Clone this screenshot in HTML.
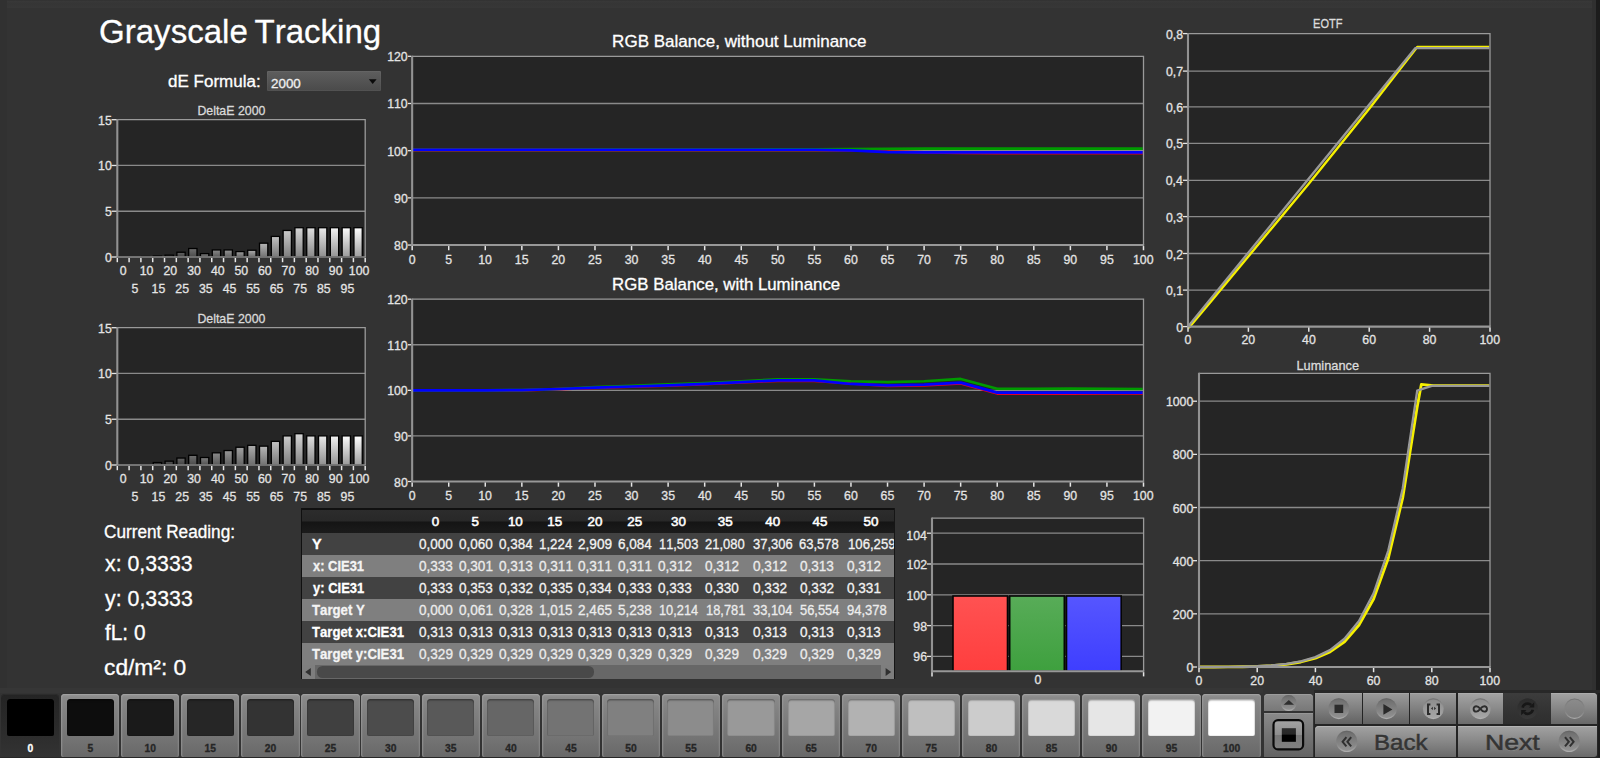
<!DOCTYPE html>
<html lang="en"><head><meta charset="utf-8"><title>Grayscale Tracking</title>
<style>
html,body{margin:0;padding:0;background:#333;}
body{width:1600px;height:758px;overflow:hidden;position:relative;font-family:"Liberation Sans",sans-serif;font-kerning:none;}
#app{position:absolute;left:0;top:0;width:1600px;height:758px;overflow:hidden;background:#333;}
.t{position:absolute;white-space:nowrap;line-height:1;transform-origin:0 0;-webkit-text-stroke:0.3px currentColor;}
svg{position:absolute;left:0;top:0;font-family:"Liberation Sans",sans-serif;font-kerning:none;}
svg text{font-kerning:none;stroke:currentColor;stroke-width:0.3px;}
.abs{position:absolute;}
header,section,nav{display:block;margin:0;padding:0;}
</style></head><body><div id="app">

<div class="abs" style="left:0;top:0;width:1600px;height:7.5px;background:linear-gradient(#2f2f2f 0,#383838 14%,#353535 50%,#373737 100%)"></div>
<div class="abs" style="left:0;top:0;width:7px;height:690px;background:#313131"></div>
<div class="abs" style="left:0;top:687.5px;width:1263px;height:5.2px;background:#363636"></div>
<header id="page-head">
<div class="t " style="left:98.54px;top:15px;font-size:33.6px;color:#fff;transform:scaleX(0.9846);word-spacing:-2.60px;">Grayscale Tracking</div>
<div class="t " style="left:168.28px;top:73px;font-size:17.3px;color:#fff;transform:scaleX(0.9846);">dE Formula:</div>
<div class="abs" id="dd" style="left:267px;top:71px;width:113.5px;height:20px;background:linear-gradient(#5e5e5e,#4a4a4a);border-radius:1px;box-shadow:inset 0 0 0 1px rgba(255,255,255,.04)"></div>
<div class="t " style="left:270.63px;top:77px;font-size:13.6px;color:#f0f0f0;transform:scaleX(0.9849);">2000</div>
</header>
<section id="charts" aria-label="Charts">
<svg width="1600" height="758" viewBox="0 0 1600 758" style="pointer-events:none">
<path d="M368.8 79.3h7.8l-3.9 4.6z" fill="#0a0a0a"/>
<rect x="117.3" y="119.7" width="247.89999999999998" height="137.3" fill="#252525"/>
<line x1="117.3" y1="211.23" x2="365.2" y2="211.23" stroke="#8a8a8a" stroke-width="1.3"/>
<line x1="117.3" y1="165.47" x2="365.2" y2="165.47" stroke="#8a8a8a" stroke-width="1.3"/>
<linearGradient id="g0_2" x1="0" y1="0" x2="0" y2="1"><stop offset="0" stop-color="rgb(55,55,55)"/><stop offset="1" stop-color="rgb(40,40,40)"/></linearGradient>
<rect x="141.46" y="256.54" width="8.3" height="0.46" fill="url(#g0_2)" stroke="#000" stroke-width="1.3"/>
<linearGradient id="g0_3" x1="0" y1="0" x2="0" y2="1"><stop offset="0" stop-color="rgb(71,71,71)"/><stop offset="1" stop-color="rgb(49,49,49)"/></linearGradient>
<rect x="153.27" y="256.08" width="8.3" height="0.92" fill="url(#g0_3)" stroke="#000" stroke-width="1.3"/>
<linearGradient id="g0_4" x1="0" y1="0" x2="0" y2="1"><stop offset="0" stop-color="rgb(86,86,86)"/><stop offset="1" stop-color="rgb(58,58,58)"/></linearGradient>
<rect x="165.07" y="255.17" width="8.3" height="1.83" fill="url(#g0_4)" stroke="#000" stroke-width="1.3"/>
<linearGradient id="g0_5" x1="0" y1="0" x2="0" y2="1"><stop offset="0" stop-color="rgb(100,100,100)"/><stop offset="1" stop-color="rgb(66,66,66)"/></linearGradient>
<rect x="176.88" y="252.24" width="8.3" height="4.76" fill="url(#g0_5)" stroke="#000" stroke-width="1.3"/>
<linearGradient id="g0_6" x1="0" y1="0" x2="0" y2="1"><stop offset="0" stop-color="rgb(113,113,113)"/><stop offset="1" stop-color="rgb(74,74,74)"/></linearGradient>
<rect x="188.68" y="248.49" width="8.3" height="8.51" fill="url(#g0_6)" stroke="#000" stroke-width="1.3"/>
<linearGradient id="g0_7" x1="0" y1="0" x2="0" y2="1"><stop offset="0" stop-color="rgb(126,126,126)"/><stop offset="1" stop-color="rgb(81,81,81)"/></linearGradient>
<rect x="200.49" y="253.61" width="8.3" height="3.39" fill="url(#g0_7)" stroke="#000" stroke-width="1.3"/>
<linearGradient id="g0_8" x1="0" y1="0" x2="0" y2="1"><stop offset="0" stop-color="rgb(138,138,138)"/><stop offset="1" stop-color="rgb(88,88,88)"/></linearGradient>
<rect x="212.29" y="249.95" width="8.3" height="7.05" fill="url(#g0_8)" stroke="#000" stroke-width="1.3"/>
<linearGradient id="g0_9" x1="0" y1="0" x2="0" y2="1"><stop offset="0" stop-color="rgb(150,150,150)"/><stop offset="1" stop-color="rgb(95,95,95)"/></linearGradient>
<rect x="224.10" y="249.95" width="8.3" height="7.05" fill="url(#g0_9)" stroke="#000" stroke-width="1.3"/>
<linearGradient id="g0_10" x1="0" y1="0" x2="0" y2="1"><stop offset="0" stop-color="rgb(161,161,161)"/><stop offset="1" stop-color="rgb(101,101,101)"/></linearGradient>
<rect x="235.90" y="251.60" width="8.3" height="5.40" fill="url(#g0_10)" stroke="#000" stroke-width="1.3"/>
<linearGradient id="g0_11" x1="0" y1="0" x2="0" y2="1"><stop offset="0" stop-color="rgb(172,172,172)"/><stop offset="1" stop-color="rgb(108,108,108)"/></linearGradient>
<rect x="247.70" y="250.23" width="8.3" height="6.77" fill="url(#g0_11)" stroke="#000" stroke-width="1.3"/>
<linearGradient id="g0_12" x1="0" y1="0" x2="0" y2="1"><stop offset="0" stop-color="rgb(183,183,183)"/><stop offset="1" stop-color="rgb(114,114,114)"/></linearGradient>
<rect x="259.51" y="243.18" width="8.3" height="13.82" fill="url(#g0_12)" stroke="#000" stroke-width="1.3"/>
<linearGradient id="g0_13" x1="0" y1="0" x2="0" y2="1"><stop offset="0" stop-color="rgb(193,193,193)"/><stop offset="1" stop-color="rgb(120,120,120)"/></linearGradient>
<rect x="271.31" y="236.41" width="8.3" height="20.60" fill="url(#g0_13)" stroke="#000" stroke-width="1.3"/>
<linearGradient id="g0_14" x1="0" y1="0" x2="0" y2="1"><stop offset="0" stop-color="rgb(203,203,203)"/><stop offset="1" stop-color="rgb(126,126,126)"/></linearGradient>
<rect x="283.12" y="230.46" width="8.3" height="26.54" fill="url(#g0_14)" stroke="#000" stroke-width="1.3"/>
<linearGradient id="g0_15" x1="0" y1="0" x2="0" y2="1"><stop offset="0" stop-color="rgb(213,213,213)"/><stop offset="1" stop-color="rgb(132,132,132)"/></linearGradient>
<rect x="294.92" y="227.71" width="8.3" height="29.29" fill="url(#g0_15)" stroke="#000" stroke-width="1.3"/>
<linearGradient id="g0_16" x1="0" y1="0" x2="0" y2="1"><stop offset="0" stop-color="rgb(223,223,223)"/><stop offset="1" stop-color="rgb(137,137,137)"/></linearGradient>
<rect x="306.73" y="227.71" width="8.3" height="29.29" fill="url(#g0_16)" stroke="#000" stroke-width="1.3"/>
<linearGradient id="g0_17" x1="0" y1="0" x2="0" y2="1"><stop offset="0" stop-color="rgb(233,233,233)"/><stop offset="1" stop-color="rgb(143,143,143)"/></linearGradient>
<rect x="318.53" y="227.71" width="8.3" height="29.29" fill="url(#g0_17)" stroke="#000" stroke-width="1.3"/>
<linearGradient id="g0_18" x1="0" y1="0" x2="0" y2="1"><stop offset="0" stop-color="rgb(242,242,242)"/><stop offset="1" stop-color="rgb(148,148,148)"/></linearGradient>
<rect x="330.34" y="227.71" width="8.3" height="29.29" fill="url(#g0_18)" stroke="#000" stroke-width="1.3"/>
<linearGradient id="g0_19" x1="0" y1="0" x2="0" y2="1"><stop offset="0" stop-color="rgb(252,252,252)"/><stop offset="1" stop-color="rgb(154,154,154)"/></linearGradient>
<rect x="342.14" y="227.71" width="8.3" height="29.29" fill="url(#g0_19)" stroke="#000" stroke-width="1.3"/>
<linearGradient id="g0_20" x1="0" y1="0" x2="0" y2="1"><stop offset="0" stop-color="rgb(255,255,255)"/><stop offset="1" stop-color="rgb(159,159,159)"/></linearGradient>
<rect x="353.95" y="227.71" width="8.3" height="29.29" fill="url(#g0_20)" stroke="#000" stroke-width="1.3"/>
<path d="M117.3 119.7H365.2V257.0" fill="none" stroke="#9a9a9a" stroke-width="1.3"/>
<path d="M117.3 119.05V257.0" fill="none" stroke="#929292" stroke-width="2.1"/>
<path d="M116.25 257.0H365.84999999999997" fill="none" stroke="#8e8e8e" stroke-width="1.5"/>
<line x1="117.30" y1="258.0" x2="117.30" y2="262.2" stroke="#e6e6e6" stroke-width="1.5"/>
<line x1="129.10" y1="258.0" x2="129.10" y2="262.2" stroke="#e6e6e6" stroke-width="1.5"/>
<line x1="140.91" y1="258.0" x2="140.91" y2="262.2" stroke="#e6e6e6" stroke-width="1.5"/>
<line x1="152.71" y1="258.0" x2="152.71" y2="262.2" stroke="#e6e6e6" stroke-width="1.5"/>
<line x1="164.52" y1="258.0" x2="164.52" y2="262.2" stroke="#e6e6e6" stroke-width="1.5"/>
<line x1="176.32" y1="258.0" x2="176.32" y2="262.2" stroke="#e6e6e6" stroke-width="1.5"/>
<line x1="188.13" y1="258.0" x2="188.13" y2="262.2" stroke="#e6e6e6" stroke-width="1.5"/>
<line x1="199.93" y1="258.0" x2="199.93" y2="262.2" stroke="#e6e6e6" stroke-width="1.5"/>
<line x1="211.74" y1="258.0" x2="211.74" y2="262.2" stroke="#e6e6e6" stroke-width="1.5"/>
<line x1="223.54" y1="258.0" x2="223.54" y2="262.2" stroke="#e6e6e6" stroke-width="1.5"/>
<line x1="235.35" y1="258.0" x2="235.35" y2="262.2" stroke="#e6e6e6" stroke-width="1.5"/>
<line x1="247.15" y1="258.0" x2="247.15" y2="262.2" stroke="#e6e6e6" stroke-width="1.5"/>
<line x1="258.96" y1="258.0" x2="258.96" y2="262.2" stroke="#e6e6e6" stroke-width="1.5"/>
<line x1="270.76" y1="258.0" x2="270.76" y2="262.2" stroke="#e6e6e6" stroke-width="1.5"/>
<line x1="282.57" y1="258.0" x2="282.57" y2="262.2" stroke="#e6e6e6" stroke-width="1.5"/>
<line x1="294.37" y1="258.0" x2="294.37" y2="262.2" stroke="#e6e6e6" stroke-width="1.5"/>
<line x1="306.18" y1="258.0" x2="306.18" y2="262.2" stroke="#e6e6e6" stroke-width="1.5"/>
<line x1="317.98" y1="258.0" x2="317.98" y2="262.2" stroke="#e6e6e6" stroke-width="1.5"/>
<line x1="329.79" y1="258.0" x2="329.79" y2="262.2" stroke="#e6e6e6" stroke-width="1.5"/>
<line x1="341.59" y1="258.0" x2="341.59" y2="262.2" stroke="#e6e6e6" stroke-width="1.5"/>
<line x1="353.40" y1="258.0" x2="353.40" y2="262.2" stroke="#e6e6e6" stroke-width="1.5"/>
<line x1="365.20" y1="258.0" x2="365.20" y2="262.2" stroke="#e6e6e6" stroke-width="1.5"/>
<line x1="111.50" y1="257.00" x2="116.50" y2="257.00" stroke="#e6e6e6" stroke-width="1.3"/>
<text transform="translate(104.93,262.00) scale(0.9700,1)" font-size="12.7" fill="#e4e4e4" color="#e4e4e4">0</text>
<line x1="111.50" y1="211.23" x2="116.50" y2="211.23" stroke="#e6e6e6" stroke-width="1.3"/>
<text transform="translate(104.97,216.23) scale(0.9700,1)" font-size="12.7" fill="#e4e4e4" color="#e4e4e4">5</text>
<line x1="111.50" y1="165.47" x2="116.50" y2="165.47" stroke="#e6e6e6" stroke-width="1.3"/>
<text transform="translate(98.08,170.47) scale(0.9700,1)" font-size="12.7" fill="#e4e4e4" color="#e4e4e4">10</text>
<line x1="111.50" y1="119.70" x2="116.50" y2="119.70" stroke="#e6e6e6" stroke-width="1.3"/>
<text transform="translate(98.11,124.70) scale(0.9700,1)" font-size="12.7" fill="#e4e4e4" color="#e4e4e4">15</text>
<text transform="translate(119.78,275.20) scale(0.9700,1)" font-size="12.7" fill="#e4e4e4" color="#e4e4e4">0</text>
<text transform="translate(131.59,292.60) scale(0.9700,1)" font-size="12.7" fill="#e4e4e4" color="#e4e4e4">5</text>
<text transform="translate(139.73,275.20) scale(0.9700,1)" font-size="12.7" fill="#e4e4e4" color="#e4e4e4">10</text>
<text transform="translate(151.55,292.60) scale(0.9700,1)" font-size="12.7" fill="#e4e4e4" color="#e4e4e4">15</text>
<text transform="translate(163.50,275.20) scale(0.9700,1)" font-size="12.7" fill="#e4e4e4" color="#e4e4e4">20</text>
<text transform="translate(175.32,292.60) scale(0.9700,1)" font-size="12.7" fill="#e4e4e4" color="#e4e4e4">25</text>
<text transform="translate(187.19,275.20) scale(0.9700,1)" font-size="12.7" fill="#e4e4e4" color="#e4e4e4">30</text>
<text transform="translate(199.01,292.60) scale(0.9700,1)" font-size="12.7" fill="#e4e4e4" color="#e4e4e4">35</text>
<text transform="translate(210.89,275.20) scale(0.9700,1)" font-size="12.7" fill="#e4e4e4" color="#e4e4e4">40</text>
<text transform="translate(222.71,292.60) scale(0.9700,1)" font-size="12.7" fill="#e4e4e4" color="#e4e4e4">45</text>
<text transform="translate(234.39,275.20) scale(0.9700,1)" font-size="12.7" fill="#e4e4e4" color="#e4e4e4">50</text>
<text transform="translate(246.22,292.60) scale(0.9700,1)" font-size="12.7" fill="#e4e4e4" color="#e4e4e4">55</text>
<text transform="translate(257.94,275.20) scale(0.9700,1)" font-size="12.7" fill="#e4e4e4" color="#e4e4e4">60</text>
<text transform="translate(269.76,292.60) scale(0.9700,1)" font-size="12.7" fill="#e4e4e4" color="#e4e4e4">65</text>
<text transform="translate(281.54,275.20) scale(0.9700,1)" font-size="12.7" fill="#e4e4e4" color="#e4e4e4">70</text>
<text transform="translate(293.37,292.60) scale(0.9700,1)" font-size="12.7" fill="#e4e4e4" color="#e4e4e4">75</text>
<text transform="translate(305.20,275.20) scale(0.9700,1)" font-size="12.7" fill="#e4e4e4" color="#e4e4e4">80</text>
<text transform="translate(317.02,292.60) scale(0.9700,1)" font-size="12.7" fill="#e4e4e4" color="#e4e4e4">85</text>
<text transform="translate(328.79,275.20) scale(0.9700,1)" font-size="12.7" fill="#e4e4e4" color="#e4e4e4">90</text>
<text transform="translate(340.61,292.60) scale(0.9700,1)" font-size="12.7" fill="#e4e4e4" color="#e4e4e4">95</text>
<text transform="translate(348.79,275.20) scale(0.9700,1)" font-size="12.7" fill="#e4e4e4" color="#e4e4e4">100</text>
<text transform="translate(197.39,114.80) scale(0.9373,1)" font-size="13.2" fill="#dadada" color="#dadada">DeltaE 2000</text>
<rect x="117.3" y="327.7" width="247.89999999999998" height="137.3" fill="#252525"/>
<line x1="117.3" y1="419.23" x2="365.2" y2="419.23" stroke="#8a8a8a" stroke-width="1.3"/>
<line x1="117.3" y1="373.47" x2="365.2" y2="373.47" stroke="#8a8a8a" stroke-width="1.3"/>
<linearGradient id="g208_2" x1="0" y1="0" x2="0" y2="1"><stop offset="0" stop-color="rgb(55,55,55)"/><stop offset="1" stop-color="rgb(40,40,40)"/></linearGradient>
<rect x="141.46" y="464.73" width="8.3" height="0.27" fill="url(#g208_2)" stroke="#000" stroke-width="1.3"/>
<linearGradient id="g208_3" x1="0" y1="0" x2="0" y2="1"><stop offset="0" stop-color="rgb(71,71,71)"/><stop offset="1" stop-color="rgb(49,49,49)"/></linearGradient>
<rect x="153.27" y="462.53" width="8.3" height="2.47" fill="url(#g208_3)" stroke="#000" stroke-width="1.3"/>
<linearGradient id="g208_4" x1="0" y1="0" x2="0" y2="1"><stop offset="0" stop-color="rgb(86,86,86)"/><stop offset="1" stop-color="rgb(58,58,58)"/></linearGradient>
<rect x="165.07" y="461.16" width="8.3" height="3.84" fill="url(#g208_4)" stroke="#000" stroke-width="1.3"/>
<linearGradient id="g208_5" x1="0" y1="0" x2="0" y2="1"><stop offset="0" stop-color="rgb(100,100,100)"/><stop offset="1" stop-color="rgb(66,66,66)"/></linearGradient>
<rect x="176.88" y="458.04" width="8.3" height="6.96" fill="url(#g208_5)" stroke="#000" stroke-width="1.3"/>
<linearGradient id="g208_6" x1="0" y1="0" x2="0" y2="1"><stop offset="0" stop-color="rgb(113,113,113)"/><stop offset="1" stop-color="rgb(74,74,74)"/></linearGradient>
<rect x="188.68" y="455.30" width="8.3" height="9.70" fill="url(#g208_6)" stroke="#000" stroke-width="1.3"/>
<linearGradient id="g208_7" x1="0" y1="0" x2="0" y2="1"><stop offset="0" stop-color="rgb(126,126,126)"/><stop offset="1" stop-color="rgb(81,81,81)"/></linearGradient>
<rect x="200.49" y="457.49" width="8.3" height="7.51" fill="url(#g208_7)" stroke="#000" stroke-width="1.3"/>
<linearGradient id="g208_8" x1="0" y1="0" x2="0" y2="1"><stop offset="0" stop-color="rgb(138,138,138)"/><stop offset="1" stop-color="rgb(88,88,88)"/></linearGradient>
<rect x="212.29" y="452.83" width="8.3" height="12.17" fill="url(#g208_8)" stroke="#000" stroke-width="1.3"/>
<linearGradient id="g208_9" x1="0" y1="0" x2="0" y2="1"><stop offset="0" stop-color="rgb(150,150,150)"/><stop offset="1" stop-color="rgb(95,95,95)"/></linearGradient>
<rect x="224.10" y="450.54" width="8.3" height="14.46" fill="url(#g208_9)" stroke="#000" stroke-width="1.3"/>
<linearGradient id="g208_10" x1="0" y1="0" x2="0" y2="1"><stop offset="0" stop-color="rgb(161,161,161)"/><stop offset="1" stop-color="rgb(101,101,101)"/></linearGradient>
<rect x="235.90" y="447.24" width="8.3" height="17.76" fill="url(#g208_10)" stroke="#000" stroke-width="1.3"/>
<linearGradient id="g208_11" x1="0" y1="0" x2="0" y2="1"><stop offset="0" stop-color="rgb(172,172,172)"/><stop offset="1" stop-color="rgb(108,108,108)"/></linearGradient>
<rect x="247.70" y="445.32" width="8.3" height="19.68" fill="url(#g208_11)" stroke="#000" stroke-width="1.3"/>
<linearGradient id="g208_12" x1="0" y1="0" x2="0" y2="1"><stop offset="0" stop-color="rgb(183,183,183)"/><stop offset="1" stop-color="rgb(114,114,114)"/></linearGradient>
<rect x="259.51" y="446.14" width="8.3" height="18.86" fill="url(#g208_12)" stroke="#000" stroke-width="1.3"/>
<linearGradient id="g208_13" x1="0" y1="0" x2="0" y2="1"><stop offset="0" stop-color="rgb(193,193,193)"/><stop offset="1" stop-color="rgb(120,120,120)"/></linearGradient>
<rect x="271.31" y="441.38" width="8.3" height="23.62" fill="url(#g208_13)" stroke="#000" stroke-width="1.3"/>
<linearGradient id="g208_14" x1="0" y1="0" x2="0" y2="1"><stop offset="0" stop-color="rgb(203,203,203)"/><stop offset="1" stop-color="rgb(126,126,126)"/></linearGradient>
<rect x="283.12" y="435.89" width="8.3" height="29.11" fill="url(#g208_14)" stroke="#000" stroke-width="1.3"/>
<linearGradient id="g208_15" x1="0" y1="0" x2="0" y2="1"><stop offset="0" stop-color="rgb(213,213,213)"/><stop offset="1" stop-color="rgb(132,132,132)"/></linearGradient>
<rect x="294.92" y="433.70" width="8.3" height="31.30" fill="url(#g208_15)" stroke="#000" stroke-width="1.3"/>
<linearGradient id="g208_16" x1="0" y1="0" x2="0" y2="1"><stop offset="0" stop-color="rgb(223,223,223)"/><stop offset="1" stop-color="rgb(137,137,137)"/></linearGradient>
<rect x="306.73" y="435.89" width="8.3" height="29.11" fill="url(#g208_16)" stroke="#000" stroke-width="1.3"/>
<linearGradient id="g208_17" x1="0" y1="0" x2="0" y2="1"><stop offset="0" stop-color="rgb(233,233,233)"/><stop offset="1" stop-color="rgb(143,143,143)"/></linearGradient>
<rect x="318.53" y="435.89" width="8.3" height="29.11" fill="url(#g208_17)" stroke="#000" stroke-width="1.3"/>
<linearGradient id="g208_18" x1="0" y1="0" x2="0" y2="1"><stop offset="0" stop-color="rgb(242,242,242)"/><stop offset="1" stop-color="rgb(148,148,148)"/></linearGradient>
<rect x="330.34" y="435.89" width="8.3" height="29.11" fill="url(#g208_18)" stroke="#000" stroke-width="1.3"/>
<linearGradient id="g208_19" x1="0" y1="0" x2="0" y2="1"><stop offset="0" stop-color="rgb(252,252,252)"/><stop offset="1" stop-color="rgb(154,154,154)"/></linearGradient>
<rect x="342.14" y="435.89" width="8.3" height="29.11" fill="url(#g208_19)" stroke="#000" stroke-width="1.3"/>
<linearGradient id="g208_20" x1="0" y1="0" x2="0" y2="1"><stop offset="0" stop-color="rgb(255,255,255)"/><stop offset="1" stop-color="rgb(159,159,159)"/></linearGradient>
<rect x="353.95" y="435.89" width="8.3" height="29.11" fill="url(#g208_20)" stroke="#000" stroke-width="1.3"/>
<path d="M117.3 327.7H365.2V465.0" fill="none" stroke="#9a9a9a" stroke-width="1.3"/>
<path d="M117.3 327.05V465.0" fill="none" stroke="#929292" stroke-width="2.1"/>
<path d="M116.25 465.0H365.84999999999997" fill="none" stroke="#8e8e8e" stroke-width="1.5"/>
<line x1="117.30" y1="466.0" x2="117.30" y2="470.2" stroke="#e6e6e6" stroke-width="1.5"/>
<line x1="129.10" y1="466.0" x2="129.10" y2="470.2" stroke="#e6e6e6" stroke-width="1.5"/>
<line x1="140.91" y1="466.0" x2="140.91" y2="470.2" stroke="#e6e6e6" stroke-width="1.5"/>
<line x1="152.71" y1="466.0" x2="152.71" y2="470.2" stroke="#e6e6e6" stroke-width="1.5"/>
<line x1="164.52" y1="466.0" x2="164.52" y2="470.2" stroke="#e6e6e6" stroke-width="1.5"/>
<line x1="176.32" y1="466.0" x2="176.32" y2="470.2" stroke="#e6e6e6" stroke-width="1.5"/>
<line x1="188.13" y1="466.0" x2="188.13" y2="470.2" stroke="#e6e6e6" stroke-width="1.5"/>
<line x1="199.93" y1="466.0" x2="199.93" y2="470.2" stroke="#e6e6e6" stroke-width="1.5"/>
<line x1="211.74" y1="466.0" x2="211.74" y2="470.2" stroke="#e6e6e6" stroke-width="1.5"/>
<line x1="223.54" y1="466.0" x2="223.54" y2="470.2" stroke="#e6e6e6" stroke-width="1.5"/>
<line x1="235.35" y1="466.0" x2="235.35" y2="470.2" stroke="#e6e6e6" stroke-width="1.5"/>
<line x1="247.15" y1="466.0" x2="247.15" y2="470.2" stroke="#e6e6e6" stroke-width="1.5"/>
<line x1="258.96" y1="466.0" x2="258.96" y2="470.2" stroke="#e6e6e6" stroke-width="1.5"/>
<line x1="270.76" y1="466.0" x2="270.76" y2="470.2" stroke="#e6e6e6" stroke-width="1.5"/>
<line x1="282.57" y1="466.0" x2="282.57" y2="470.2" stroke="#e6e6e6" stroke-width="1.5"/>
<line x1="294.37" y1="466.0" x2="294.37" y2="470.2" stroke="#e6e6e6" stroke-width="1.5"/>
<line x1="306.18" y1="466.0" x2="306.18" y2="470.2" stroke="#e6e6e6" stroke-width="1.5"/>
<line x1="317.98" y1="466.0" x2="317.98" y2="470.2" stroke="#e6e6e6" stroke-width="1.5"/>
<line x1="329.79" y1="466.0" x2="329.79" y2="470.2" stroke="#e6e6e6" stroke-width="1.5"/>
<line x1="341.59" y1="466.0" x2="341.59" y2="470.2" stroke="#e6e6e6" stroke-width="1.5"/>
<line x1="353.40" y1="466.0" x2="353.40" y2="470.2" stroke="#e6e6e6" stroke-width="1.5"/>
<line x1="365.20" y1="466.0" x2="365.20" y2="470.2" stroke="#e6e6e6" stroke-width="1.5"/>
<line x1="111.50" y1="465.00" x2="116.50" y2="465.00" stroke="#e6e6e6" stroke-width="1.3"/>
<text transform="translate(104.93,470.00) scale(0.9700,1)" font-size="12.7" fill="#e4e4e4" color="#e4e4e4">0</text>
<line x1="111.50" y1="419.23" x2="116.50" y2="419.23" stroke="#e6e6e6" stroke-width="1.3"/>
<text transform="translate(104.97,424.23) scale(0.9700,1)" font-size="12.7" fill="#e4e4e4" color="#e4e4e4">5</text>
<line x1="111.50" y1="373.47" x2="116.50" y2="373.47" stroke="#e6e6e6" stroke-width="1.3"/>
<text transform="translate(98.08,378.47) scale(0.9700,1)" font-size="12.7" fill="#e4e4e4" color="#e4e4e4">10</text>
<line x1="111.50" y1="327.70" x2="116.50" y2="327.70" stroke="#e6e6e6" stroke-width="1.3"/>
<text transform="translate(98.11,332.70) scale(0.9700,1)" font-size="12.7" fill="#e4e4e4" color="#e4e4e4">15</text>
<text transform="translate(119.78,483.20) scale(0.9700,1)" font-size="12.7" fill="#e4e4e4" color="#e4e4e4">0</text>
<text transform="translate(131.59,500.60) scale(0.9700,1)" font-size="12.7" fill="#e4e4e4" color="#e4e4e4">5</text>
<text transform="translate(139.73,483.20) scale(0.9700,1)" font-size="12.7" fill="#e4e4e4" color="#e4e4e4">10</text>
<text transform="translate(151.55,500.60) scale(0.9700,1)" font-size="12.7" fill="#e4e4e4" color="#e4e4e4">15</text>
<text transform="translate(163.50,483.20) scale(0.9700,1)" font-size="12.7" fill="#e4e4e4" color="#e4e4e4">20</text>
<text transform="translate(175.32,500.60) scale(0.9700,1)" font-size="12.7" fill="#e4e4e4" color="#e4e4e4">25</text>
<text transform="translate(187.19,483.20) scale(0.9700,1)" font-size="12.7" fill="#e4e4e4" color="#e4e4e4">30</text>
<text transform="translate(199.01,500.60) scale(0.9700,1)" font-size="12.7" fill="#e4e4e4" color="#e4e4e4">35</text>
<text transform="translate(210.89,483.20) scale(0.9700,1)" font-size="12.7" fill="#e4e4e4" color="#e4e4e4">40</text>
<text transform="translate(222.71,500.60) scale(0.9700,1)" font-size="12.7" fill="#e4e4e4" color="#e4e4e4">45</text>
<text transform="translate(234.39,483.20) scale(0.9700,1)" font-size="12.7" fill="#e4e4e4" color="#e4e4e4">50</text>
<text transform="translate(246.22,500.60) scale(0.9700,1)" font-size="12.7" fill="#e4e4e4" color="#e4e4e4">55</text>
<text transform="translate(257.94,483.20) scale(0.9700,1)" font-size="12.7" fill="#e4e4e4" color="#e4e4e4">60</text>
<text transform="translate(269.76,500.60) scale(0.9700,1)" font-size="12.7" fill="#e4e4e4" color="#e4e4e4">65</text>
<text transform="translate(281.54,483.20) scale(0.9700,1)" font-size="12.7" fill="#e4e4e4" color="#e4e4e4">70</text>
<text transform="translate(293.37,500.60) scale(0.9700,1)" font-size="12.7" fill="#e4e4e4" color="#e4e4e4">75</text>
<text transform="translate(305.20,483.20) scale(0.9700,1)" font-size="12.7" fill="#e4e4e4" color="#e4e4e4">80</text>
<text transform="translate(317.02,500.60) scale(0.9700,1)" font-size="12.7" fill="#e4e4e4" color="#e4e4e4">85</text>
<text transform="translate(328.79,483.20) scale(0.9700,1)" font-size="12.7" fill="#e4e4e4" color="#e4e4e4">90</text>
<text transform="translate(340.61,500.60) scale(0.9700,1)" font-size="12.7" fill="#e4e4e4" color="#e4e4e4">95</text>
<text transform="translate(348.79,483.20) scale(0.9700,1)" font-size="12.7" fill="#e4e4e4" color="#e4e4e4">100</text>
<text transform="translate(197.39,322.80) scale(0.9373,1)" font-size="13.2" fill="#dadada" color="#dadada">DeltaE 2000</text>
<rect x="412.15" y="56.3" width="731.35" height="188.75" fill="#252525"/>
<line x1="412.15" y1="197.86" x2="1143.5" y2="197.86" stroke="#8a8a8a" stroke-width="1.3"/>
<line x1="412.15" y1="150.68" x2="1143.5" y2="150.68" stroke="#8a8a8a" stroke-width="1.3"/>
<line x1="412.15" y1="103.49" x2="1143.5" y2="103.49" stroke="#8a8a8a" stroke-width="1.3"/>
<clipPath id="cp56"><rect x="412.15" y="56.3" width="730.5500000000001" height="188.75"/></clipPath>
<polyline points="412.1,149.83 448.7,149.83 485.3,149.83 521.9,149.83 558.4,149.83 595.0,149.83 631.6,149.83 668.1,149.83 704.7,149.83 741.3,149.83 777.8,149.83 814.4,149.83 851.0,150.20 887.5,151.38 924.1,152.33 960.7,152.80 997.2,153.03 1033.8,153.13 1070.4,153.13 1106.9,153.13 1143.5,153.13" fill="none" stroke="#e0002a" stroke-width="2.7" stroke-linejoin="round" clip-path="url(#cp56)"/>
<polyline points="412.1,149.73 448.7,149.73 485.3,149.73 521.9,149.73 558.4,149.73 595.0,149.50 631.6,149.50 668.1,149.50 704.7,149.50 741.3,149.50 777.8,149.26 814.4,149.26 851.0,149.02 887.5,148.79 924.1,148.55 960.7,148.55 997.2,148.55 1033.8,148.55 1070.4,148.55 1106.9,148.55 1143.5,148.55" fill="none" stroke="#009a00" stroke-width="2.7" stroke-linejoin="round" clip-path="url(#cp56)"/>
<polyline points="412.1,149.73 448.7,149.73 485.3,149.73 521.9,149.73 558.4,149.73 595.0,149.73 631.6,149.73 668.1,149.73 704.7,149.73 741.3,149.73 777.8,149.73 814.4,149.73 851.0,150.44 887.5,152.09 924.1,152.33 960.7,152.33 997.2,152.33 1033.8,152.33 1070.4,152.33 1106.9,152.33 1143.5,152.33" fill="none" stroke="#0000ff" stroke-width="2.7" stroke-linejoin="round" clip-path="url(#cp56)"/>
<path d="M412.15 56.3H1143.5V245.05" fill="none" stroke="#9a9a9a" stroke-width="1.3"/>
<path d="M412.15 55.65V245.05" fill="none" stroke="#929292" stroke-width="2.1"/>
<path d="M411.09999999999997 245.05H1144.15" fill="none" stroke="#989898" stroke-width="2.1"/>
<line x1="412.15" y1="246.05" x2="412.15" y2="250.25" stroke="#e6e6e6" stroke-width="1.5"/>
<text transform="translate(408.72,263.85) scale(0.9700,1)" font-size="12.7" fill="#e4e4e4" color="#e4e4e4">0</text>
<line x1="448.72" y1="246.05" x2="448.72" y2="250.25" stroke="#e6e6e6" stroke-width="1.5"/>
<text transform="translate(445.30,263.85) scale(0.9700,1)" font-size="12.7" fill="#e4e4e4" color="#e4e4e4">5</text>
<line x1="485.28" y1="246.05" x2="485.28" y2="250.25" stroke="#e6e6e6" stroke-width="1.5"/>
<text transform="translate(478.21,263.85) scale(0.9700,1)" font-size="12.7" fill="#e4e4e4" color="#e4e4e4">10</text>
<line x1="521.85" y1="246.05" x2="521.85" y2="250.25" stroke="#e6e6e6" stroke-width="1.5"/>
<text transform="translate(514.79,263.85) scale(0.9700,1)" font-size="12.7" fill="#e4e4e4" color="#e4e4e4">15</text>
<line x1="558.42" y1="246.05" x2="558.42" y2="250.25" stroke="#e6e6e6" stroke-width="1.5"/>
<text transform="translate(551.50,263.85) scale(0.9700,1)" font-size="12.7" fill="#e4e4e4" color="#e4e4e4">20</text>
<line x1="594.99" y1="246.05" x2="594.99" y2="250.25" stroke="#e6e6e6" stroke-width="1.5"/>
<text transform="translate(588.09,263.85) scale(0.9700,1)" font-size="12.7" fill="#e4e4e4" color="#e4e4e4">25</text>
<line x1="631.56" y1="246.05" x2="631.56" y2="250.25" stroke="#e6e6e6" stroke-width="1.5"/>
<text transform="translate(624.71,263.85) scale(0.9700,1)" font-size="12.7" fill="#e4e4e4" color="#e4e4e4">30</text>
<line x1="668.12" y1="246.05" x2="668.12" y2="250.25" stroke="#e6e6e6" stroke-width="1.5"/>
<text transform="translate(661.30,263.85) scale(0.9700,1)" font-size="12.7" fill="#e4e4e4" color="#e4e4e4">35</text>
<line x1="704.69" y1="246.05" x2="704.69" y2="250.25" stroke="#e6e6e6" stroke-width="1.5"/>
<text transform="translate(697.94,263.85) scale(0.9700,1)" font-size="12.7" fill="#e4e4e4" color="#e4e4e4">40</text>
<line x1="741.26" y1="246.05" x2="741.26" y2="250.25" stroke="#e6e6e6" stroke-width="1.5"/>
<text transform="translate(734.52,263.85) scale(0.9700,1)" font-size="12.7" fill="#e4e4e4" color="#e4e4e4">45</text>
<line x1="777.83" y1="246.05" x2="777.83" y2="250.25" stroke="#e6e6e6" stroke-width="1.5"/>
<text transform="translate(770.97,263.85) scale(0.9700,1)" font-size="12.7" fill="#e4e4e4" color="#e4e4e4">50</text>
<line x1="814.39" y1="246.05" x2="814.39" y2="250.25" stroke="#e6e6e6" stroke-width="1.5"/>
<text transform="translate(807.55,263.85) scale(0.9700,1)" font-size="12.7" fill="#e4e4e4" color="#e4e4e4">55</text>
<line x1="850.96" y1="246.05" x2="850.96" y2="250.25" stroke="#e6e6e6" stroke-width="1.5"/>
<text transform="translate(844.04,263.85) scale(0.9700,1)" font-size="12.7" fill="#e4e4e4" color="#e4e4e4">60</text>
<line x1="887.53" y1="246.05" x2="887.53" y2="250.25" stroke="#e6e6e6" stroke-width="1.5"/>
<text transform="translate(880.62,263.85) scale(0.9700,1)" font-size="12.7" fill="#e4e4e4" color="#e4e4e4">65</text>
<line x1="924.10" y1="246.05" x2="924.10" y2="250.25" stroke="#e6e6e6" stroke-width="1.5"/>
<text transform="translate(917.17,263.85) scale(0.9700,1)" font-size="12.7" fill="#e4e4e4" color="#e4e4e4">70</text>
<line x1="960.66" y1="246.05" x2="960.66" y2="250.25" stroke="#e6e6e6" stroke-width="1.5"/>
<text transform="translate(953.75,263.85) scale(0.9700,1)" font-size="12.7" fill="#e4e4e4" color="#e4e4e4">75</text>
<line x1="997.23" y1="246.05" x2="997.23" y2="250.25" stroke="#e6e6e6" stroke-width="1.5"/>
<text transform="translate(990.35,263.85) scale(0.9700,1)" font-size="12.7" fill="#e4e4e4" color="#e4e4e4">80</text>
<line x1="1033.80" y1="246.05" x2="1033.80" y2="250.25" stroke="#e6e6e6" stroke-width="1.5"/>
<text transform="translate(1026.94,263.85) scale(0.9700,1)" font-size="12.7" fill="#e4e4e4" color="#e4e4e4">85</text>
<line x1="1070.37" y1="246.05" x2="1070.37" y2="250.25" stroke="#e6e6e6" stroke-width="1.5"/>
<text transform="translate(1063.47,263.85) scale(0.9700,1)" font-size="12.7" fill="#e4e4e4" color="#e4e4e4">90</text>
<line x1="1106.93" y1="246.05" x2="1106.93" y2="250.25" stroke="#e6e6e6" stroke-width="1.5"/>
<text transform="translate(1100.05,263.85) scale(0.9700,1)" font-size="12.7" fill="#e4e4e4" color="#e4e4e4">95</text>
<line x1="1143.50" y1="246.05" x2="1143.50" y2="250.25" stroke="#e6e6e6" stroke-width="1.5"/>
<text transform="translate(1132.99,263.85) scale(0.9700,1)" font-size="12.7" fill="#e4e4e4" color="#e4e4e4">100</text>
<line x1="407.85" y1="245.05" x2="411.05" y2="245.05" stroke="#e6e6e6" stroke-width="1.3"/>
<text transform="translate(394.03,250.05) scale(0.9700,1)" font-size="12.7" fill="#e4e4e4" color="#e4e4e4">80</text>
<line x1="407.85" y1="197.86" x2="411.05" y2="197.86" stroke="#e6e6e6" stroke-width="1.3"/>
<text transform="translate(394.03,202.86) scale(0.9700,1)" font-size="12.7" fill="#e4e4e4" color="#e4e4e4">90</text>
<line x1="407.85" y1="150.68" x2="411.05" y2="150.68" stroke="#e6e6e6" stroke-width="1.3"/>
<text transform="translate(387.18,155.68) scale(0.9700,1)" font-size="12.7" fill="#e4e4e4" color="#e4e4e4">100</text>
<line x1="407.85" y1="103.49" x2="411.05" y2="103.49" stroke="#e6e6e6" stroke-width="1.3"/>
<text transform="translate(387.18,108.49) scale(0.9700,1)" font-size="12.7" fill="#e4e4e4" color="#e4e4e4">110</text>
<line x1="407.85" y1="56.30" x2="411.05" y2="56.30" stroke="#e6e6e6" stroke-width="1.3"/>
<text transform="translate(387.18,61.30) scale(0.9700,1)" font-size="12.7" fill="#e4e4e4" color="#e4e4e4">120</text>
<text transform="translate(612.10,47.40) scale(1.0133,1)" font-size="16.8" fill="#fff" color="#fff">RGB Balance, without Luminance</text>
<rect x="412.15" y="299.2" width="731.35" height="182.3" fill="#252525"/>
<line x1="412.15" y1="435.93" x2="1143.5" y2="435.93" stroke="#8a8a8a" stroke-width="1.3"/>
<line x1="412.15" y1="390.35" x2="1143.5" y2="390.35" stroke="#8a8a8a" stroke-width="1.3"/>
<line x1="412.15" y1="344.77" x2="1143.5" y2="344.77" stroke="#8a8a8a" stroke-width="1.3"/>
<clipPath id="cp299"><rect x="412.15" y="299.2" width="730.5500000000001" height="182.3"/></clipPath>
<polyline points="412.1,390.35 448.7,390.35 485.3,390.35 521.9,390.35 558.4,389.21 595.0,387.84 631.6,386.70 668.1,385.56 704.7,384.20 741.3,382.37 777.8,380.78 814.4,380.78 851.0,383.51 887.5,385.79 924.1,385.34 960.7,383.51 997.2,393.54 1033.8,393.54 1070.4,393.54 1106.9,393.31 1143.5,393.31" fill="none" stroke="#e0002a" stroke-width="2.7" stroke-linejoin="round" clip-path="url(#cp299)"/>
<polyline points="412.1,390.35 448.7,390.35 485.3,390.35 521.9,390.12 558.4,388.98 595.0,387.16 631.6,385.79 668.1,384.43 704.7,383.06 741.3,381.24 777.8,379.41 814.4,379.41 851.0,381.24 887.5,382.15 924.1,381.24 960.7,378.96 997.2,388.75 1033.8,388.75 1070.4,388.53 1106.9,388.75 1143.5,388.98" fill="none" stroke="#009a00" stroke-width="2.7" stroke-linejoin="round" clip-path="url(#cp299)"/>
<polyline points="412.1,390.35 448.7,390.35 485.3,390.35 521.9,390.12 558.4,388.98 595.0,387.62 631.6,386.48 668.1,385.34 704.7,383.97 741.3,382.15 777.8,380.32 814.4,380.32 851.0,383.97 887.5,385.34 924.1,384.65 960.7,382.60 997.2,392.63 1033.8,392.63 1070.4,392.63 1106.9,392.63 1143.5,392.63" fill="none" stroke="#0000ff" stroke-width="2.7" stroke-linejoin="round" clip-path="url(#cp299)"/>
<path d="M412.15 299.2H1143.5V481.5" fill="none" stroke="#9a9a9a" stroke-width="1.3"/>
<path d="M412.15 298.55V481.5" fill="none" stroke="#929292" stroke-width="2.1"/>
<path d="M411.09999999999997 481.5H1144.15" fill="none" stroke="#989898" stroke-width="2.1"/>
<line x1="412.15" y1="482.5" x2="412.15" y2="486.7" stroke="#e6e6e6" stroke-width="1.5"/>
<text transform="translate(408.72,500.30) scale(0.9700,1)" font-size="12.7" fill="#e4e4e4" color="#e4e4e4">0</text>
<line x1="448.72" y1="482.5" x2="448.72" y2="486.7" stroke="#e6e6e6" stroke-width="1.5"/>
<text transform="translate(445.30,500.30) scale(0.9700,1)" font-size="12.7" fill="#e4e4e4" color="#e4e4e4">5</text>
<line x1="485.28" y1="482.5" x2="485.28" y2="486.7" stroke="#e6e6e6" stroke-width="1.5"/>
<text transform="translate(478.21,500.30) scale(0.9700,1)" font-size="12.7" fill="#e4e4e4" color="#e4e4e4">10</text>
<line x1="521.85" y1="482.5" x2="521.85" y2="486.7" stroke="#e6e6e6" stroke-width="1.5"/>
<text transform="translate(514.79,500.30) scale(0.9700,1)" font-size="12.7" fill="#e4e4e4" color="#e4e4e4">15</text>
<line x1="558.42" y1="482.5" x2="558.42" y2="486.7" stroke="#e6e6e6" stroke-width="1.5"/>
<text transform="translate(551.50,500.30) scale(0.9700,1)" font-size="12.7" fill="#e4e4e4" color="#e4e4e4">20</text>
<line x1="594.99" y1="482.5" x2="594.99" y2="486.7" stroke="#e6e6e6" stroke-width="1.5"/>
<text transform="translate(588.09,500.30) scale(0.9700,1)" font-size="12.7" fill="#e4e4e4" color="#e4e4e4">25</text>
<line x1="631.56" y1="482.5" x2="631.56" y2="486.7" stroke="#e6e6e6" stroke-width="1.5"/>
<text transform="translate(624.71,500.30) scale(0.9700,1)" font-size="12.7" fill="#e4e4e4" color="#e4e4e4">30</text>
<line x1="668.12" y1="482.5" x2="668.12" y2="486.7" stroke="#e6e6e6" stroke-width="1.5"/>
<text transform="translate(661.30,500.30) scale(0.9700,1)" font-size="12.7" fill="#e4e4e4" color="#e4e4e4">35</text>
<line x1="704.69" y1="482.5" x2="704.69" y2="486.7" stroke="#e6e6e6" stroke-width="1.5"/>
<text transform="translate(697.94,500.30) scale(0.9700,1)" font-size="12.7" fill="#e4e4e4" color="#e4e4e4">40</text>
<line x1="741.26" y1="482.5" x2="741.26" y2="486.7" stroke="#e6e6e6" stroke-width="1.5"/>
<text transform="translate(734.52,500.30) scale(0.9700,1)" font-size="12.7" fill="#e4e4e4" color="#e4e4e4">45</text>
<line x1="777.83" y1="482.5" x2="777.83" y2="486.7" stroke="#e6e6e6" stroke-width="1.5"/>
<text transform="translate(770.97,500.30) scale(0.9700,1)" font-size="12.7" fill="#e4e4e4" color="#e4e4e4">50</text>
<line x1="814.39" y1="482.5" x2="814.39" y2="486.7" stroke="#e6e6e6" stroke-width="1.5"/>
<text transform="translate(807.55,500.30) scale(0.9700,1)" font-size="12.7" fill="#e4e4e4" color="#e4e4e4">55</text>
<line x1="850.96" y1="482.5" x2="850.96" y2="486.7" stroke="#e6e6e6" stroke-width="1.5"/>
<text transform="translate(844.04,500.30) scale(0.9700,1)" font-size="12.7" fill="#e4e4e4" color="#e4e4e4">60</text>
<line x1="887.53" y1="482.5" x2="887.53" y2="486.7" stroke="#e6e6e6" stroke-width="1.5"/>
<text transform="translate(880.62,500.30) scale(0.9700,1)" font-size="12.7" fill="#e4e4e4" color="#e4e4e4">65</text>
<line x1="924.10" y1="482.5" x2="924.10" y2="486.7" stroke="#e6e6e6" stroke-width="1.5"/>
<text transform="translate(917.17,500.30) scale(0.9700,1)" font-size="12.7" fill="#e4e4e4" color="#e4e4e4">70</text>
<line x1="960.66" y1="482.5" x2="960.66" y2="486.7" stroke="#e6e6e6" stroke-width="1.5"/>
<text transform="translate(953.75,500.30) scale(0.9700,1)" font-size="12.7" fill="#e4e4e4" color="#e4e4e4">75</text>
<line x1="997.23" y1="482.5" x2="997.23" y2="486.7" stroke="#e6e6e6" stroke-width="1.5"/>
<text transform="translate(990.35,500.30) scale(0.9700,1)" font-size="12.7" fill="#e4e4e4" color="#e4e4e4">80</text>
<line x1="1033.80" y1="482.5" x2="1033.80" y2="486.7" stroke="#e6e6e6" stroke-width="1.5"/>
<text transform="translate(1026.94,500.30) scale(0.9700,1)" font-size="12.7" fill="#e4e4e4" color="#e4e4e4">85</text>
<line x1="1070.37" y1="482.5" x2="1070.37" y2="486.7" stroke="#e6e6e6" stroke-width="1.5"/>
<text transform="translate(1063.47,500.30) scale(0.9700,1)" font-size="12.7" fill="#e4e4e4" color="#e4e4e4">90</text>
<line x1="1106.93" y1="482.5" x2="1106.93" y2="486.7" stroke="#e6e6e6" stroke-width="1.5"/>
<text transform="translate(1100.05,500.30) scale(0.9700,1)" font-size="12.7" fill="#e4e4e4" color="#e4e4e4">95</text>
<line x1="1143.50" y1="482.5" x2="1143.50" y2="486.7" stroke="#e6e6e6" stroke-width="1.5"/>
<text transform="translate(1132.99,500.30) scale(0.9700,1)" font-size="12.7" fill="#e4e4e4" color="#e4e4e4">100</text>
<line x1="407.85" y1="481.50" x2="411.05" y2="481.50" stroke="#e6e6e6" stroke-width="1.3"/>
<text transform="translate(394.03,486.50) scale(0.9700,1)" font-size="12.7" fill="#e4e4e4" color="#e4e4e4">80</text>
<line x1="407.85" y1="435.93" x2="411.05" y2="435.93" stroke="#e6e6e6" stroke-width="1.3"/>
<text transform="translate(394.03,440.93) scale(0.9700,1)" font-size="12.7" fill="#e4e4e4" color="#e4e4e4">90</text>
<line x1="407.85" y1="390.35" x2="411.05" y2="390.35" stroke="#e6e6e6" stroke-width="1.3"/>
<text transform="translate(387.18,395.35) scale(0.9700,1)" font-size="12.7" fill="#e4e4e4" color="#e4e4e4">100</text>
<line x1="407.85" y1="344.77" x2="411.05" y2="344.77" stroke="#e6e6e6" stroke-width="1.3"/>
<text transform="translate(387.18,349.77) scale(0.9700,1)" font-size="12.7" fill="#e4e4e4" color="#e4e4e4">110</text>
<line x1="407.85" y1="299.20" x2="411.05" y2="299.20" stroke="#e6e6e6" stroke-width="1.3"/>
<text transform="translate(387.18,304.20) scale(0.9700,1)" font-size="12.7" fill="#e4e4e4" color="#e4e4e4">120</text>
<text transform="translate(612.12,290.30) scale(1.0021,1)" font-size="16.8" fill="#fff" color="#fff">RGB Balance, with Luminance</text>
<rect x="1188.0" y="33.6" width="302.0" height="293.0" fill="#252525"/>
<line x1="1188.0" y1="290.10" x2="1490.0" y2="290.10" stroke="#8a8a8a" stroke-width="1.3"/>
<line x1="1188.0" y1="253.50" x2="1490.0" y2="253.50" stroke="#8a8a8a" stroke-width="1.3"/>
<line x1="1188.0" y1="216.60" x2="1490.0" y2="216.60" stroke="#8a8a8a" stroke-width="1.3"/>
<line x1="1188.0" y1="180.30" x2="1490.0" y2="180.30" stroke="#8a8a8a" stroke-width="1.3"/>
<line x1="1188.0" y1="143.40" x2="1490.0" y2="143.40" stroke="#8a8a8a" stroke-width="1.3"/>
<line x1="1188.0" y1="106.90" x2="1490.0" y2="106.90" stroke="#8a8a8a" stroke-width="1.3"/>
<line x1="1188.0" y1="71.10" x2="1490.0" y2="71.10" stroke="#8a8a8a" stroke-width="1.3"/>
<clipPath id="cp33"><rect x="1188.0" y="33.6" width="301.2" height="295.0"/></clipPath>
<polyline points="1188.0,328.80 1212.2,299.86 1308.8,183.76 1369.2,108.68 1417.2,46.97 1490.0,46.97" fill="none" stroke="#f6f000" stroke-width="2.4" stroke-linejoin="round" clip-path="url(#cp33)"/>
<polyline points="1188.0,326.60 1415.4,48.07 1490.0,48.07" fill="none" stroke="#9a9a9a" stroke-width="2.3" stroke-linejoin="round" clip-path="url(#cp33)"/>
<path d="M1188.0 33.6H1490.0V326.6" fill="none" stroke="#9a9a9a" stroke-width="1.3"/>
<path d="M1188.0 32.95V326.6" fill="none" stroke="#929292" stroke-width="2.1"/>
<path d="M1186.95 326.6H1490.65" fill="none" stroke="#989898" stroke-width="2.1"/>
<line x1="1188.00" y1="327.6" x2="1188.00" y2="331.8" stroke="#e6e6e6" stroke-width="1.5"/>
<text transform="translate(1184.57,344.40) scale(0.9700,1)" font-size="12.7" fill="#e4e4e4" color="#e4e4e4">0</text>
<line x1="1248.40" y1="327.6" x2="1248.40" y2="331.8" stroke="#e6e6e6" stroke-width="1.5"/>
<text transform="translate(1241.48,344.40) scale(0.9700,1)" font-size="12.7" fill="#e4e4e4" color="#e4e4e4">20</text>
<line x1="1308.80" y1="327.6" x2="1308.80" y2="331.8" stroke="#e6e6e6" stroke-width="1.5"/>
<text transform="translate(1302.05,344.40) scale(0.9700,1)" font-size="12.7" fill="#e4e4e4" color="#e4e4e4">40</text>
<line x1="1369.20" y1="327.6" x2="1369.20" y2="331.8" stroke="#e6e6e6" stroke-width="1.5"/>
<text transform="translate(1362.28,344.40) scale(0.9700,1)" font-size="12.7" fill="#e4e4e4" color="#e4e4e4">60</text>
<line x1="1429.60" y1="327.6" x2="1429.60" y2="331.8" stroke="#e6e6e6" stroke-width="1.5"/>
<text transform="translate(1422.72,344.40) scale(0.9700,1)" font-size="12.7" fill="#e4e4e4" color="#e4e4e4">80</text>
<line x1="1490.00" y1="327.6" x2="1490.00" y2="331.8" stroke="#e6e6e6" stroke-width="1.5"/>
<text transform="translate(1479.49,344.40) scale(0.9700,1)" font-size="12.7" fill="#e4e4e4" color="#e4e4e4">100</text>
<line x1="1182.90" y1="326.60" x2="1187.20" y2="326.60" stroke="#e6e6e6" stroke-width="1.3"/>
<text transform="translate(1176.13,331.60) scale(0.9700,1)" font-size="12.7" fill="#e4e4e4" color="#e4e4e4">0</text>
<line x1="1182.90" y1="290.10" x2="1187.20" y2="290.10" stroke="#e6e6e6" stroke-width="1.3"/>
<text transform="translate(1165.98,295.10) scale(0.9700,1)" font-size="12.7" fill="#e4e4e4" color="#e4e4e4">0,1</text>
<line x1="1182.90" y1="253.50" x2="1187.20" y2="253.50" stroke="#e6e6e6" stroke-width="1.3"/>
<text transform="translate(1165.99,258.50) scale(0.9700,1)" font-size="12.7" fill="#e4e4e4" color="#e4e4e4">0,2</text>
<line x1="1182.90" y1="216.60" x2="1187.20" y2="216.60" stroke="#e6e6e6" stroke-width="1.3"/>
<text transform="translate(1165.92,221.60) scale(0.9700,1)" font-size="12.7" fill="#e4e4e4" color="#e4e4e4">0,3</text>
<line x1="1182.90" y1="180.30" x2="1187.20" y2="180.30" stroke="#e6e6e6" stroke-width="1.3"/>
<text transform="translate(1165.74,185.30) scale(0.9700,1)" font-size="12.7" fill="#e4e4e4" color="#e4e4e4">0,4</text>
<line x1="1182.90" y1="143.40" x2="1187.20" y2="143.40" stroke="#e6e6e6" stroke-width="1.3"/>
<text transform="translate(1165.89,148.40) scale(0.9700,1)" font-size="12.7" fill="#e4e4e4" color="#e4e4e4">0,5</text>
<line x1="1182.90" y1="106.90" x2="1187.20" y2="106.90" stroke="#e6e6e6" stroke-width="1.3"/>
<text transform="translate(1165.92,111.90) scale(0.9700,1)" font-size="12.7" fill="#e4e4e4" color="#e4e4e4">0,6</text>
<line x1="1182.90" y1="71.10" x2="1187.20" y2="71.10" stroke="#e6e6e6" stroke-width="1.3"/>
<text transform="translate(1165.99,76.10) scale(0.9700,1)" font-size="12.7" fill="#e4e4e4" color="#e4e4e4">0,7</text>
<line x1="1182.90" y1="33.60" x2="1187.20" y2="33.60" stroke="#e6e6e6" stroke-width="1.3"/>
<text transform="translate(1165.91,38.60) scale(0.9700,1)" font-size="12.7" fill="#e4e4e4" color="#e4e4e4">0,8</text>
<text transform="translate(1313.10,28.30) scale(0.8337,1)" font-size="13.2" fill="#dcdcdc" color="#dcdcdc">EOTF</text>
<rect x="1199.0" y="373.3" width="291.0" height="293.7" fill="#252525"/>
<line x1="1199.0" y1="613.84" x2="1490.0" y2="613.84" stroke="#8a8a8a" stroke-width="1.3"/>
<line x1="1199.0" y1="560.68" x2="1490.0" y2="560.68" stroke="#8a8a8a" stroke-width="1.3"/>
<line x1="1199.0" y1="507.52" x2="1490.0" y2="507.52" stroke="#8a8a8a" stroke-width="1.3"/>
<line x1="1199.0" y1="454.37" x2="1490.0" y2="454.37" stroke="#8a8a8a" stroke-width="1.3"/>
<line x1="1199.0" y1="401.21" x2="1490.0" y2="401.21" stroke="#8a8a8a" stroke-width="1.3"/>
<clipPath id="cp373"><rect x="1199.0" y="373.3" width="290.2" height="295.7"/></clipPath>
<polyline points="1199.0,667.00 1213.5,666.98 1228.1,666.91 1242.7,666.73 1257.2,666.34 1271.8,665.62 1286.3,664.29 1300.8,662.00 1315.4,658.20 1330.0,651.96 1344.5,641.91 1359.0,625.00 1373.6,598.96 1388.2,558.56 1402.7,497.96 1417.2,407.06 1421.3,384.46 1433.3,385.53 1490.0,385.66" fill="none" stroke="#f6f000" stroke-width="2.8" stroke-linejoin="round" clip-path="url(#cp373)"/>
<polyline points="1199.0,667.00 1213.5,666.98 1228.1,666.90 1242.7,666.68 1257.2,666.23 1271.8,665.38 1286.3,663.94 1300.8,661.39 1315.4,657.09 1330.0,650.10 1344.5,638.75 1359.0,621.02 1373.6,593.38 1388.2,550.85 1402.7,488.39 1417.2,390.58 1431.8,385.79 1446.3,385.79 1460.9,385.79 1475.5,385.79 1490.0,385.79" fill="none" stroke="#9a9a9a" stroke-width="2.3" stroke-linejoin="round" clip-path="url(#cp373)"/>
<path d="M1199.0 373.3H1490.0V667.0" fill="none" stroke="#9a9a9a" stroke-width="1.3"/>
<path d="M1199.0 372.65000000000003V667.0" fill="none" stroke="#929292" stroke-width="2.1"/>
<path d="M1197.95 667.0H1490.65" fill="none" stroke="#989898" stroke-width="2.1"/>
<line x1="1199.00" y1="668.0" x2="1199.00" y2="672.2" stroke="#e6e6e6" stroke-width="1.5"/>
<text transform="translate(1195.57,685.00) scale(0.9700,1)" font-size="12.7" fill="#e4e4e4" color="#e4e4e4">0</text>
<line x1="1257.20" y1="668.0" x2="1257.20" y2="672.2" stroke="#e6e6e6" stroke-width="1.5"/>
<text transform="translate(1250.28,685.00) scale(0.9700,1)" font-size="12.7" fill="#e4e4e4" color="#e4e4e4">20</text>
<line x1="1315.40" y1="668.0" x2="1315.40" y2="672.2" stroke="#e6e6e6" stroke-width="1.5"/>
<text transform="translate(1308.65,685.00) scale(0.9700,1)" font-size="12.7" fill="#e4e4e4" color="#e4e4e4">40</text>
<line x1="1373.60" y1="668.0" x2="1373.60" y2="672.2" stroke="#e6e6e6" stroke-width="1.5"/>
<text transform="translate(1366.68,685.00) scale(0.9700,1)" font-size="12.7" fill="#e4e4e4" color="#e4e4e4">60</text>
<line x1="1431.80" y1="668.0" x2="1431.80" y2="672.2" stroke="#e6e6e6" stroke-width="1.5"/>
<text transform="translate(1424.92,685.00) scale(0.9700,1)" font-size="12.7" fill="#e4e4e4" color="#e4e4e4">80</text>
<line x1="1490.00" y1="668.0" x2="1490.00" y2="672.2" stroke="#e6e6e6" stroke-width="1.5"/>
<text transform="translate(1479.49,685.00) scale(0.9700,1)" font-size="12.7" fill="#e4e4e4" color="#e4e4e4">100</text>
<line x1="1192.90" y1="667.00" x2="1197.00" y2="667.00" stroke="#e6e6e6" stroke-width="1.3"/>
<text transform="translate(1186.43,672.00) scale(0.9700,1)" font-size="12.7" fill="#e4e4e4" color="#e4e4e4">0</text>
<line x1="1192.90" y1="613.84" x2="1197.00" y2="613.84" stroke="#e6e6e6" stroke-width="1.3"/>
<text transform="translate(1172.73,618.84) scale(0.9700,1)" font-size="12.7" fill="#e4e4e4" color="#e4e4e4">200</text>
<line x1="1192.90" y1="560.68" x2="1197.00" y2="560.68" stroke="#e6e6e6" stroke-width="1.3"/>
<text transform="translate(1172.73,565.68) scale(0.9700,1)" font-size="12.7" fill="#e4e4e4" color="#e4e4e4">400</text>
<line x1="1192.90" y1="507.52" x2="1197.00" y2="507.52" stroke="#e6e6e6" stroke-width="1.3"/>
<text transform="translate(1172.73,512.52) scale(0.9700,1)" font-size="12.7" fill="#e4e4e4" color="#e4e4e4">600</text>
<line x1="1192.90" y1="454.37" x2="1197.00" y2="454.37" stroke="#e6e6e6" stroke-width="1.3"/>
<text transform="translate(1172.73,459.37) scale(0.9700,1)" font-size="12.7" fill="#e4e4e4" color="#e4e4e4">800</text>
<line x1="1192.90" y1="401.21" x2="1197.00" y2="401.21" stroke="#e6e6e6" stroke-width="1.3"/>
<text transform="translate(1165.88,406.21) scale(0.9700,1)" font-size="12.7" fill="#e4e4e4" color="#e4e4e4">1000</text>
<text transform="translate(1296.45,369.60) scale(0.9697,1)" font-size="13.2" fill="#dcdcdc" color="#dcdcdc">Luminance</text>
<rect x="932.0" y="518.2" width="211.5999999999999" height="153.0" fill="#252525"/>
<line x1="932.0" y1="656.40" x2="1143.6" y2="656.40" stroke="#8a8a8a" stroke-width="1.3"/>
<line x1="926.90" y1="656.40" x2="931.40" y2="656.40" stroke="#e6e6e6" stroke-width="1.3"/>
<text transform="translate(913.34,661.40) scale(0.9700,1)" font-size="12.7" fill="#e4e4e4" color="#e4e4e4">96</text>
<line x1="932.0" y1="625.60" x2="1143.6" y2="625.60" stroke="#8a8a8a" stroke-width="1.3"/>
<line x1="926.90" y1="625.60" x2="931.40" y2="625.60" stroke="#e6e6e6" stroke-width="1.3"/>
<text transform="translate(913.33,630.60) scale(0.9700,1)" font-size="12.7" fill="#e4e4e4" color="#e4e4e4">98</text>
<line x1="932.0" y1="594.80" x2="1143.6" y2="594.80" stroke="#8a8a8a" stroke-width="1.3"/>
<line x1="926.90" y1="594.80" x2="931.40" y2="594.80" stroke="#e6e6e6" stroke-width="1.3"/>
<text transform="translate(906.43,599.80) scale(0.9700,1)" font-size="12.7" fill="#e4e4e4" color="#e4e4e4">100</text>
<line x1="932.0" y1="564.00" x2="1143.6" y2="564.00" stroke="#8a8a8a" stroke-width="1.3"/>
<line x1="926.90" y1="564.00" x2="931.40" y2="564.00" stroke="#e6e6e6" stroke-width="1.3"/>
<text transform="translate(906.57,569.00) scale(0.9700,1)" font-size="12.7" fill="#e4e4e4" color="#e4e4e4">102</text>
<line x1="932.0" y1="533.20" x2="1143.6" y2="533.20" stroke="#8a8a8a" stroke-width="1.3"/>
<line x1="926.90" y1="533.20" x2="931.40" y2="533.20" stroke="#e6e6e6" stroke-width="1.3"/>
<text transform="translate(906.31,539.80) scale(0.9700,1)" font-size="12.7" fill="#e4e4e4" color="#e4e4e4">104</text>
<linearGradient id="gr" x1="0" y1="0" x2="0" y2="1"><stop offset="0" stop-color="#ff5252"/><stop offset="1" stop-color="#ff3e3e"/></linearGradient>
<linearGradient id="gg" x1="0" y1="0" x2="0" y2="1"><stop offset="0" stop-color="#58ac58"/><stop offset="1" stop-color="#3ea03e"/></linearGradient>
<linearGradient id="gb" x1="0" y1="0" x2="0" y2="1"><stop offset="0" stop-color="#5656ff"/><stop offset="1" stop-color="#3e3eff"/></linearGradient>
<rect x="953.0" y="596" width="54.5" height="75.20000000000005" fill="url(#gr)" stroke="#050505" stroke-width="1.6"/>
<rect x="1009.7" y="596" width="54.59999999999991" height="75.20000000000005" fill="url(#gg)" stroke="#050505" stroke-width="1.6"/>
<rect x="1066.5" y="596" width="54.700000000000045" height="75.20000000000005" fill="url(#gb)" stroke="#050505" stroke-width="1.6"/>
<path d="M932.0 518.2H1143.6V671.2" fill="none" stroke="#9a9a9a" stroke-width="1.3"/>
<path d="M932.0 517.5500000000001V671.2" fill="none" stroke="#929292" stroke-width="2.1"/>
<path d="M930.95 671.2H1144.25" fill="none" stroke="#989898" stroke-width="2.1"/>
<line x1="932.00" y1="672.2" x2="932.00" y2="676.4000000000001" stroke="#e6e6e6" stroke-width="1.5"/>
<line x1="1143.60" y1="672.2" x2="1143.60" y2="676.4000000000001" stroke="#e6e6e6" stroke-width="1.5"/>
<text transform="translate(1034.57,684.20) scale(0.9700,1)" font-size="12.7" fill="#e4e4e4" color="#e4e4e4">0</text>
</svg>
</section>
<section id="current-reading" aria-label="Current reading">
<div class="t " style="left:103.93px;top:524px;font-size:17.6px;color:#fff;transform:scaleX(0.9777);">Current Reading:</div>
<div class="t " style="left:104.56px;top:554px;font-size:21.4px;color:#fff;transform:scaleX(0.9958);">x: 0,3333</div>
<div class="t " style="left:104.75px;top:589px;font-size:21.4px;color:#fff;transform:scaleX(0.9971);">y: 0,3333</div>
<div class="t " style="left:104.51px;top:623px;font-size:21.4px;color:#fff;transform:scaleX(0.9728);">fL: 0</div>
<div class="t " style="left:103.83px;top:658px;font-size:21.4px;color:#fff;transform:scaleX(1.0642);">cd/m²: 0</div>
</section>
<section id="grid-table" aria-label="Grayscale data">
<div class="abs" id="grid" style="left:300.5px;top:508.4px;width:594.7px;height:170.39999999999995px;background:#101010"></div>
<div class="abs" style="left:302.0px;top:510.0px;width:592.2px;height:23.399999999999977px;background:linear-gradient(#2c2c2c 0,#282828 49%,#141414 51%,#1b1b1b 100%)"></div>
<div class="t " style="left:431.87px;top:515px;font-size:13.4px;color:#fff;-webkit-text-stroke:0.55px #fff;">0</div>
<div class="t " style="left:471.49px;top:515px;font-size:13.4px;color:#fff;-webkit-text-stroke:0.55px #fff;">5</div>
<div class="t " style="left:507.90px;top:515px;font-size:13.4px;color:#fff;-webkit-text-stroke:0.55px #fff;">10</div>
<div class="t " style="left:547.22px;top:515px;font-size:13.4px;color:#fff;-webkit-text-stroke:0.55px #fff;">15</div>
<div class="t " style="left:587.47px;top:515px;font-size:13.4px;color:#fff;-webkit-text-stroke:0.55px #fff;">20</div>
<div class="t " style="left:627.29px;top:515px;font-size:13.4px;color:#fff;-webkit-text-stroke:0.55px #fff;">25</div>
<div class="t " style="left:670.95px;top:515px;font-size:13.4px;color:#fff;-webkit-text-stroke:0.55px #fff;">30</div>
<div class="t " style="left:717.87px;top:515px;font-size:13.4px;color:#fff;-webkit-text-stroke:0.55px #fff;">35</div>
<div class="t " style="left:765.36px;top:515px;font-size:13.4px;color:#fff;-webkit-text-stroke:0.55px #fff;">40</div>
<div class="t " style="left:812.48px;top:515px;font-size:13.4px;color:#fff;-webkit-text-stroke:0.55px #fff;">45</div>
<div class="t " style="left:863.54px;top:515px;font-size:13.4px;color:#fff;-webkit-text-stroke:0.55px #fff;">50</div>
<div class="abs" style="left:302.0px;top:533.4px;width:592.2px;height:22.5px;background:#424242"></div>
<div class="t " style="left:312.35px;top:537px;font-size:14.8px;color:#fff;font-weight:700;transform:scaleX(0.9808);">Y</div>
<div class="t " style="left:419.37px;top:537px;font-size:14.7px;color:#f2f2f2;transform:scaleX(0.9204);">0,000</div>
<div class="t " style="left:459.07px;top:537px;font-size:14.7px;color:#f2f2f2;transform:scaleX(0.9204);">0,060</div>
<div class="t " style="left:498.87px;top:537px;font-size:14.7px;color:#f2f2f2;transform:scaleX(0.9167);">0,384</div>
<div class="t " style="left:538.98px;top:537px;font-size:14.7px;color:#f2f2f2;transform:scaleX(0.9082);">1,224</div>
<div class="t " style="left:578.21px;top:537px;font-size:14.7px;color:#f2f2f2;transform:scaleX(0.9279);">2,909</div>
<div class="t " style="left:617.91px;top:537px;font-size:14.7px;color:#f2f2f2;transform:scaleX(0.9211);">6,084</div>
<div class="t " style="left:658.72px;top:537px;font-size:14.7px;color:#f2f2f2;transform:scaleX(0.8751);">11,503</div>
<div class="t " style="left:705.15px;top:537px;font-size:14.7px;color:#f2f2f2;transform:scaleX(0.8844);">21,080</div>
<div class="t " style="left:752.71px;top:537px;font-size:14.7px;color:#f2f2f2;transform:scaleX(0.8822);">37,306</div>
<div class="t " style="left:799.44px;top:537px;font-size:14.7px;color:#f2f2f2;transform:scaleX(0.8858);">63,578</div>
<div class="t clipr" style="left:847.80px;top:537px;font-size:14.7px;color:#f2f2f2;transform:scaleX(0.8963);">106,259</div>
<div class="abs" style="left:302.0px;top:555.3px;width:592.2px;height:22.5px;background:#7f7f7f"></div>
<div class="t " style="left:312.51px;top:559px;font-size:14.8px;color:#f4f4f4;font-weight:700;transform:scaleX(0.8740);">x: CIE31</div>
<div class="t " style="left:419.37px;top:559px;font-size:14.7px;color:#ececec;transform:scaleX(0.9222);">0,333</div>
<div class="t " style="left:459.07px;top:559px;font-size:14.7px;color:#ececec;transform:scaleX(0.9241);">0,301</div>
<div class="t " style="left:498.87px;top:559px;font-size:14.7px;color:#ececec;transform:scaleX(0.9222);">0,313</div>
<div class="t " style="left:538.67px;top:559px;font-size:14.7px;color:#ececec;transform:scaleX(0.9241);">0,311</div>
<div class="t " style="left:578.37px;top:559px;font-size:14.7px;color:#ececec;transform:scaleX(0.9241);">0,311</div>
<div class="t " style="left:618.07px;top:559px;font-size:14.7px;color:#ececec;transform:scaleX(0.9241);">0,311</div>
<div class="t " style="left:658.37px;top:559px;font-size:14.7px;color:#ececec;transform:scaleX(0.9247);">0,312</div>
<div class="t " style="left:705.27px;top:559px;font-size:14.7px;color:#ececec;transform:scaleX(0.9247);">0,312</div>
<div class="t " style="left:752.67px;top:559px;font-size:14.7px;color:#ececec;transform:scaleX(0.9247);">0,312</div>
<div class="t " style="left:799.57px;top:559px;font-size:14.7px;color:#ececec;transform:scaleX(0.9222);">0,313</div>
<div class="t clipr" style="left:847.47px;top:559px;font-size:14.7px;color:#ececec;transform:scaleX(0.9247);">0,312</div>
<div class="abs" style="left:302.0px;top:577.2px;width:592.2px;height:22.6px;background:#424242"></div>
<div class="t " style="left:312.50px;top:581px;font-size:14.8px;color:#fff;font-weight:700;transform:scaleX(0.8777);">y: CIE31</div>
<div class="t " style="left:419.37px;top:581px;font-size:14.7px;color:#f2f2f2;transform:scaleX(0.9222);">0,333</div>
<div class="t " style="left:459.07px;top:581px;font-size:14.7px;color:#f2f2f2;transform:scaleX(0.9222);">0,353</div>
<div class="t " style="left:498.87px;top:581px;font-size:14.7px;color:#f2f2f2;transform:scaleX(0.9247);">0,332</div>
<div class="t " style="left:538.67px;top:581px;font-size:14.7px;color:#f2f2f2;transform:scaleX(0.9215);">0,335</div>
<div class="t " style="left:578.37px;top:581px;font-size:14.7px;color:#f2f2f2;transform:scaleX(0.9167);">0,334</div>
<div class="t " style="left:618.07px;top:581px;font-size:14.7px;color:#f2f2f2;transform:scaleX(0.9222);">0,333</div>
<div class="t " style="left:658.37px;top:581px;font-size:14.7px;color:#f2f2f2;transform:scaleX(0.9222);">0,333</div>
<div class="t " style="left:705.27px;top:581px;font-size:14.7px;color:#f2f2f2;transform:scaleX(0.9204);">0,330</div>
<div class="t " style="left:752.67px;top:581px;font-size:14.7px;color:#f2f2f2;transform:scaleX(0.9247);">0,332</div>
<div class="t " style="left:799.57px;top:581px;font-size:14.7px;color:#f2f2f2;transform:scaleX(0.9247);">0,332</div>
<div class="t clipr" style="left:847.47px;top:581px;font-size:14.7px;color:#f2f2f2;transform:scaleX(0.9241);">0,331</div>
<div class="abs" style="left:302.0px;top:599.2px;width:592.2px;height:22.6px;background:#7f7f7f"></div>
<div class="t " style="left:312.45px;top:603px;font-size:14.8px;color:#f4f4f4;font-weight:700;transform:scaleX(0.8927);">Target Y</div>
<div class="t " style="left:419.37px;top:603px;font-size:14.7px;color:#ececec;transform:scaleX(0.9204);">0,000</div>
<div class="t " style="left:459.07px;top:603px;font-size:14.7px;color:#ececec;transform:scaleX(0.9241);">0,061</div>
<div class="t " style="left:498.87px;top:603px;font-size:14.7px;color:#ececec;transform:scaleX(0.9221);">0,328</div>
<div class="t " style="left:538.98px;top:603px;font-size:14.7px;color:#ececec;transform:scaleX(0.9130);">1,015</div>
<div class="t " style="left:578.22px;top:603px;font-size:14.7px;color:#ececec;transform:scaleX(0.9258);">2,465</div>
<div class="t " style="left:618.06px;top:603px;font-size:14.7px;color:#ececec;transform:scaleX(0.9224);">5,238</div>
<div class="t " style="left:658.72px;top:603px;font-size:14.7px;color:#ececec;transform:scaleX(0.8707);">10,214</div>
<div class="t " style="left:705.62px;top:603px;font-size:14.7px;color:#ececec;transform:scaleX(0.8765);">18,781</div>
<div class="t " style="left:752.71px;top:603px;font-size:14.7px;color:#ececec;transform:scaleX(0.8779);">33,104</div>
<div class="t " style="left:799.58px;top:603px;font-size:14.7px;color:#ececec;transform:scaleX(0.8784);">56,554</div>
<div class="t clipr" style="left:847.39px;top:603px;font-size:14.7px;color:#ececec;transform:scaleX(0.8846);">94,378</div>
<div class="abs" style="left:302.0px;top:621.2px;width:592.2px;height:22.6px;background:#424242"></div>
<div class="t " style="left:312.45px;top:625px;font-size:14.8px;color:#fff;font-weight:700;transform:scaleX(0.8878);">Target x:CIE31</div>
<div class="t " style="left:419.37px;top:625px;font-size:14.7px;color:#f2f2f2;transform:scaleX(0.9222);">0,313</div>
<div class="t " style="left:459.07px;top:625px;font-size:14.7px;color:#f2f2f2;transform:scaleX(0.9222);">0,313</div>
<div class="t " style="left:498.87px;top:625px;font-size:14.7px;color:#f2f2f2;transform:scaleX(0.9222);">0,313</div>
<div class="t " style="left:538.67px;top:625px;font-size:14.7px;color:#f2f2f2;transform:scaleX(0.9222);">0,313</div>
<div class="t " style="left:578.37px;top:625px;font-size:14.7px;color:#f2f2f2;transform:scaleX(0.9222);">0,313</div>
<div class="t " style="left:618.07px;top:625px;font-size:14.7px;color:#f2f2f2;transform:scaleX(0.9222);">0,313</div>
<div class="t " style="left:658.37px;top:625px;font-size:14.7px;color:#f2f2f2;transform:scaleX(0.9222);">0,313</div>
<div class="t " style="left:705.27px;top:625px;font-size:14.7px;color:#f2f2f2;transform:scaleX(0.9222);">0,313</div>
<div class="t " style="left:752.67px;top:625px;font-size:14.7px;color:#f2f2f2;transform:scaleX(0.9222);">0,313</div>
<div class="t " style="left:799.57px;top:625px;font-size:14.7px;color:#f2f2f2;transform:scaleX(0.9222);">0,313</div>
<div class="t clipr" style="left:847.47px;top:625px;font-size:14.7px;color:#f2f2f2;transform:scaleX(0.9222);">0,313</div>
<div class="abs" style="left:302.0px;top:643.2px;width:592.2px;height:22.5px;background:#7f7f7f"></div>
<div class="t " style="left:312.45px;top:647px;font-size:14.8px;color:#f4f4f4;font-weight:700;transform:scaleX(0.8878);">Target y:CIE31</div>
<div class="t " style="left:419.37px;top:647px;font-size:14.7px;color:#ececec;transform:scaleX(0.9235);">0,329</div>
<div class="t " style="left:459.07px;top:647px;font-size:14.7px;color:#ececec;transform:scaleX(0.9235);">0,329</div>
<div class="t " style="left:498.87px;top:647px;font-size:14.7px;color:#ececec;transform:scaleX(0.9235);">0,329</div>
<div class="t " style="left:538.67px;top:647px;font-size:14.7px;color:#ececec;transform:scaleX(0.9235);">0,329</div>
<div class="t " style="left:578.37px;top:647px;font-size:14.7px;color:#ececec;transform:scaleX(0.9235);">0,329</div>
<div class="t " style="left:618.07px;top:647px;font-size:14.7px;color:#ececec;transform:scaleX(0.9235);">0,329</div>
<div class="t " style="left:658.37px;top:647px;font-size:14.7px;color:#ececec;transform:scaleX(0.9235);">0,329</div>
<div class="t " style="left:705.27px;top:647px;font-size:14.7px;color:#ececec;transform:scaleX(0.9235);">0,329</div>
<div class="t " style="left:752.67px;top:647px;font-size:14.7px;color:#ececec;transform:scaleX(0.9235);">0,329</div>
<div class="t " style="left:799.57px;top:647px;font-size:14.7px;color:#ececec;transform:scaleX(0.9235);">0,329</div>
<div class="t clipr" style="left:847.47px;top:647px;font-size:14.7px;color:#ececec;transform:scaleX(0.9235);">0,329</div>
<div class="abs" style="left:302.0px;top:665.1px;width:592.2px;height:13.7px;background:#676767"></div>
<div class="abs" style="left:302.0px;top:665.1px;width:13px;height:13.7px;background:#7e7e7e"></div>
<div class="abs" style="left:881.2px;top:665.1px;width:13px;height:13.7px;background:#7e7e7e"></div>
<div class="abs" style="left:317.4px;top:666.2px;width:277px;height:11.4px;background:#494949;border-radius:5.5px"></div>
<svg width="1600" height="758" viewBox="0 0 1600 758"><path d="M310.8 668v8l-5.6-4z" fill="#303030"/><path d="M885.6 668v8l5.6-4z" fill="#303030"/></svg>
<div class="abs" style="left:894.2px;top:508.4px;width:1.1px;height:170.39999999999995px;background:#161616"></div>
<div class="abs" style="left:895.3000000000001px;top:508.0px;width:12px;height:172.79999999999995px;background:#333"></div>
</section>
<nav id="levels" aria-label="Grayscale levels">
<div class="abs" style="left:0;top:756.8px;width:1263px;height:1.2px;background:#272727"></div>
<div class="abs sw" style="left:1.05px;top:693.7px;width:58.2px;height:63.2px;background:linear-gradient(#242424,#2a2a2a 50%,#333);border-radius:4px 4px 2px 2px;box-shadow:inset 0 1px 0 #2c2c2c;"></div>
<div class="abs" style="left:6.60px;top:698.9px;width:47.1px;height:37.2px;border-radius:3.5px 3.5px 2px 2px;background:rgb(0,0,0);box-shadow:inset 0 1.5px 1.5px rgba(0,0,0,.32),inset 0 0 0 0.8px rgba(0,0,0,.08)"></div>
<div class="t " style="left:27.39px;top:744px;font-size:10.3px;color:#fff;font-weight:700;">0</div>
<div class="abs sw" style="left:61.12px;top:693.7px;width:58.2px;height:63.2px;background:linear-gradient(#989898,#8a8a8a 5%,#808080 30%,#747474 70%,#686868);border-radius:4px 4px 2px 2px;box-shadow:inset 0 1px 0 #a0a0a0,inset 1.3px 0 0 rgba(160,160,160,.55),inset -1.3px 0 0 rgba(150,150,150,.5);"></div>
<div class="abs" style="left:66.67px;top:698.9px;width:47.1px;height:37.2px;border-radius:3.5px 3.5px 2px 2px;background:rgb(13,13,13);box-shadow:inset 0 1.5px 1.5px rgba(0,0,0,.32),inset 0 0 0 0.8px rgba(0,0,0,.08)"></div>
<div class="t " style="left:87.44px;top:744px;font-size:10.3px;color:#262626;font-weight:700;">5</div>
<div class="abs sw" style="left:121.19px;top:693.7px;width:58.2px;height:63.2px;background:linear-gradient(#989898,#8a8a8a 5%,#808080 30%,#747474 70%,#686868);border-radius:4px 4px 2px 2px;box-shadow:inset 0 1px 0 #a0a0a0,inset 1.3px 0 0 rgba(160,160,160,.55),inset -1.3px 0 0 rgba(150,150,150,.5);"></div>
<div class="abs" style="left:126.74px;top:698.9px;width:47.1px;height:37.2px;border-radius:3.5px 3.5px 2px 2px;background:rgb(26,26,26);box-shadow:inset 0 1.5px 1.5px rgba(0,0,0,.32),inset 0 0 0 0.8px rgba(0,0,0,.08)"></div>
<div class="t " style="left:144.55px;top:744px;font-size:10.3px;color:#262626;font-weight:700;">10</div>
<div class="abs sw" style="left:181.26px;top:693.7px;width:58.2px;height:63.2px;background:linear-gradient(#989898,#8a8a8a 5%,#808080 30%,#747474 70%,#686868);border-radius:4px 4px 2px 2px;box-shadow:inset 0 1px 0 #a0a0a0,inset 1.3px 0 0 rgba(160,160,160,.55),inset -1.3px 0 0 rgba(150,150,150,.5);"></div>
<div class="abs" style="left:186.81px;top:698.9px;width:47.1px;height:37.2px;border-radius:3.5px 3.5px 2px 2px;background:rgb(38,38,38);box-shadow:inset 0 1.5px 1.5px rgba(0,0,0,.32),inset 0 0 0 0.8px rgba(0,0,0,.08)"></div>
<div class="t " style="left:204.55px;top:744px;font-size:10.3px;color:#262626;font-weight:700;">15</div>
<div class="abs sw" style="left:241.33px;top:693.7px;width:58.2px;height:63.2px;background:linear-gradient(#989898,#8a8a8a 5%,#808080 30%,#747474 70%,#686868);border-radius:4px 4px 2px 2px;box-shadow:inset 0 1px 0 #a0a0a0,inset 1.3px 0 0 rgba(160,160,160,.55),inset -1.3px 0 0 rgba(150,150,150,.5);"></div>
<div class="abs" style="left:246.88px;top:698.9px;width:47.1px;height:37.2px;border-radius:3.5px 3.5px 2px 2px;background:rgb(51,51,51);box-shadow:inset 0 1.5px 1.5px rgba(0,0,0,.32),inset 0 0 0 0.8px rgba(0,0,0,.08)"></div>
<div class="t " style="left:264.83px;top:744px;font-size:10.3px;color:#262626;font-weight:700;">20</div>
<div class="abs sw" style="left:301.40px;top:693.7px;width:58.2px;height:63.2px;background:linear-gradient(#989898,#8a8a8a 5%,#808080 30%,#747474 70%,#686868);border-radius:4px 4px 2px 2px;box-shadow:inset 0 1px 0 #a0a0a0,inset 1.3px 0 0 rgba(160,160,160,.55),inset -1.3px 0 0 rgba(150,150,150,.5);"></div>
<div class="abs" style="left:306.95px;top:698.9px;width:47.1px;height:37.2px;border-radius:3.5px 3.5px 2px 2px;background:rgb(64,64,64);box-shadow:inset 0 1.5px 1.5px rgba(0,0,0,.32),inset 0 0 0 0.8px rgba(0,0,0,.08)"></div>
<div class="t " style="left:324.84px;top:744px;font-size:10.3px;color:#262626;font-weight:700;">25</div>
<div class="abs sw" style="left:361.47px;top:693.7px;width:58.2px;height:63.2px;background:linear-gradient(#989898,#8a8a8a 5%,#808080 30%,#747474 70%,#686868);border-radius:4px 4px 2px 2px;box-shadow:inset 0 1px 0 #a0a0a0,inset 1.3px 0 0 rgba(160,160,160,.55),inset -1.3px 0 0 rgba(150,150,150,.5);"></div>
<div class="abs" style="left:367.02px;top:698.9px;width:47.1px;height:37.2px;border-radius:3.5px 3.5px 2px 2px;background:rgb(76,76,76);box-shadow:inset 0 1.5px 1.5px rgba(0,0,0,.32),inset 0 0 0 0.8px rgba(0,0,0,.08)"></div>
<div class="t " style="left:385.03px;top:744px;font-size:10.3px;color:#262626;font-weight:700;">30</div>
<div class="abs sw" style="left:421.54px;top:693.7px;width:58.2px;height:63.2px;background:linear-gradient(#989898,#8a8a8a 5%,#808080 30%,#747474 70%,#686868);border-radius:4px 4px 2px 2px;box-shadow:inset 0 1px 0 #a0a0a0,inset 1.3px 0 0 rgba(160,160,160,.55),inset -1.3px 0 0 rgba(150,150,150,.5);"></div>
<div class="abs" style="left:427.09px;top:698.9px;width:47.1px;height:37.2px;border-radius:3.5px 3.5px 2px 2px;background:rgb(89,89,89);box-shadow:inset 0 1.5px 1.5px rgba(0,0,0,.32),inset 0 0 0 0.8px rgba(0,0,0,.08)"></div>
<div class="t " style="left:445.04px;top:744px;font-size:10.3px;color:#262626;font-weight:700;">35</div>
<div class="abs sw" style="left:481.61px;top:693.7px;width:58.2px;height:63.2px;background:linear-gradient(#989898,#8a8a8a 5%,#808080 30%,#747474 70%,#686868);border-radius:4px 4px 2px 2px;box-shadow:inset 0 1px 0 #a0a0a0,inset 1.3px 0 0 rgba(160,160,160,.55),inset -1.3px 0 0 rgba(150,150,150,.5);"></div>
<div class="abs" style="left:487.16px;top:698.9px;width:47.1px;height:37.2px;border-radius:3.5px 3.5px 2px 2px;background:rgb(102,102,102);box-shadow:inset 0 1.5px 1.5px rgba(0,0,0,.32),inset 0 0 0 0.8px rgba(0,0,0,.08)"></div>
<div class="t " style="left:505.21px;top:744px;font-size:10.3px;color:#262626;font-weight:700;">40</div>
<div class="abs sw" style="left:541.68px;top:693.7px;width:58.2px;height:63.2px;background:linear-gradient(#989898,#8a8a8a 5%,#808080 30%,#747474 70%,#686868);border-radius:4px 4px 2px 2px;box-shadow:inset 0 1px 0 #a0a0a0,inset 1.3px 0 0 rgba(160,160,160,.55),inset -1.3px 0 0 rgba(150,150,150,.5);"></div>
<div class="abs" style="left:547.23px;top:698.9px;width:47.1px;height:37.2px;border-radius:3.5px 3.5px 2px 2px;background:rgb(115,115,115);box-shadow:inset 0 1.5px 1.5px rgba(0,0,0,.32),inset 0 0 0 0.8px rgba(0,0,0,.08)"></div>
<div class="t " style="left:565.22px;top:744px;font-size:10.3px;color:#262626;font-weight:700;">45</div>
<div class="abs sw" style="left:601.75px;top:693.7px;width:58.2px;height:63.2px;background:linear-gradient(#989898,#8a8a8a 5%,#808080 30%,#747474 70%,#686868);border-radius:4px 4px 2px 2px;box-shadow:inset 0 1px 0 #a0a0a0,inset 1.3px 0 0 rgba(160,160,160,.55),inset -1.3px 0 0 rgba(150,150,150,.5);"></div>
<div class="abs" style="left:607.30px;top:698.9px;width:47.1px;height:37.2px;border-radius:3.5px 3.5px 2px 2px;background:rgb(128,128,128);box-shadow:inset 0 1.5px 1.5px rgba(0,0,0,.32),inset 0 0 0 0.8px rgba(0,0,0,.08)"></div>
<div class="t " style="left:625.27px;top:744px;font-size:10.3px;color:#262626;font-weight:700;">50</div>
<div class="abs sw" style="left:661.82px;top:693.7px;width:58.2px;height:63.2px;background:linear-gradient(#989898,#8a8a8a 5%,#808080 30%,#747474 70%,#686868);border-radius:4px 4px 2px 2px;box-shadow:inset 0 1px 0 #a0a0a0,inset 1.3px 0 0 rgba(160,160,160,.55),inset -1.3px 0 0 rgba(150,150,150,.5);"></div>
<div class="abs" style="left:667.37px;top:698.9px;width:47.1px;height:37.2px;border-radius:3.5px 3.5px 2px 2px;background:rgb(140,140,140);box-shadow:inset 0 1.5px 1.5px rgba(0,0,0,.32),inset 0 0 0 0.8px rgba(0,0,0,.08)"></div>
<div class="t " style="left:685.28px;top:744px;font-size:10.3px;color:#262626;font-weight:700;">55</div>
<div class="abs sw" style="left:721.89px;top:693.7px;width:58.2px;height:63.2px;background:linear-gradient(#989898,#8a8a8a 5%,#808080 30%,#747474 70%,#686868);border-radius:4px 4px 2px 2px;box-shadow:inset 0 1px 0 #a0a0a0,inset 1.3px 0 0 rgba(160,160,160,.55),inset -1.3px 0 0 rgba(150,150,150,.5);"></div>
<div class="abs" style="left:727.44px;top:698.9px;width:47.1px;height:37.2px;border-radius:3.5px 3.5px 2px 2px;background:rgb(153,153,153);box-shadow:inset 0 1.5px 1.5px rgba(0,0,0,.32),inset 0 0 0 0.8px rgba(0,0,0,.08)"></div>
<div class="t " style="left:745.38px;top:744px;font-size:10.3px;color:#262626;font-weight:700;">60</div>
<div class="abs sw" style="left:781.96px;top:693.7px;width:58.2px;height:63.2px;background:linear-gradient(#989898,#8a8a8a 5%,#808080 30%,#747474 70%,#686868);border-radius:4px 4px 2px 2px;box-shadow:inset 0 1px 0 #a0a0a0,inset 1.3px 0 0 rgba(160,160,160,.55),inset -1.3px 0 0 rgba(150,150,150,.5);"></div>
<div class="abs" style="left:787.51px;top:698.9px;width:47.1px;height:37.2px;border-radius:3.5px 3.5px 2px 2px;background:rgb(166,166,166);box-shadow:inset 0 1.5px 1.5px rgba(0,0,0,.32),inset 0 0 0 0.8px rgba(0,0,0,.08)"></div>
<div class="t " style="left:805.39px;top:744px;font-size:10.3px;color:#262626;font-weight:700;">65</div>
<div class="abs sw" style="left:842.03px;top:693.7px;width:58.2px;height:63.2px;background:linear-gradient(#989898,#8a8a8a 5%,#808080 30%,#747474 70%,#686868);border-radius:4px 4px 2px 2px;box-shadow:inset 0 1px 0 #a0a0a0,inset 1.3px 0 0 rgba(160,160,160,.55),inset -1.3px 0 0 rgba(150,150,150,.5);"></div>
<div class="abs" style="left:847.58px;top:698.9px;width:47.1px;height:37.2px;border-radius:3.5px 3.5px 2px 2px;background:rgb(178,178,178);box-shadow:inset 0 1.5px 1.5px rgba(0,0,0,.32),inset 0 0 0 0.8px rgba(0,0,0,.08)"></div>
<div class="t " style="left:865.49px;top:744px;font-size:10.3px;color:#262626;font-weight:700;">70</div>
<div class="abs sw" style="left:902.10px;top:693.7px;width:58.2px;height:63.2px;background:linear-gradient(#989898,#8a8a8a 5%,#808080 30%,#747474 70%,#686868);border-radius:4px 4px 2px 2px;box-shadow:inset 0 1px 0 #a0a0a0,inset 1.3px 0 0 rgba(160,160,160,.55),inset -1.3px 0 0 rgba(150,150,150,.5);"></div>
<div class="abs" style="left:907.65px;top:698.9px;width:47.1px;height:37.2px;border-radius:3.5px 3.5px 2px 2px;background:rgb(191,191,191);box-shadow:inset 0 1.5px 1.5px rgba(0,0,0,.32),inset 0 0 0 0.8px rgba(0,0,0,.08)"></div>
<div class="t " style="left:925.49px;top:744px;font-size:10.3px;color:#262626;font-weight:700;">75</div>
<div class="abs sw" style="left:962.17px;top:693.7px;width:58.2px;height:63.2px;background:linear-gradient(#989898,#8a8a8a 5%,#808080 30%,#747474 70%,#686868);border-radius:4px 4px 2px 2px;box-shadow:inset 0 1px 0 #a0a0a0,inset 1.3px 0 0 rgba(160,160,160,.55),inset -1.3px 0 0 rgba(150,150,150,.5);"></div>
<div class="abs" style="left:967.72px;top:698.9px;width:47.1px;height:37.2px;border-radius:3.5px 3.5px 2px 2px;background:rgb(204,204,204);box-shadow:inset 0 1.5px 1.5px rgba(0,0,0,.32),inset 0 0 0 0.8px rgba(0,0,0,.08)"></div>
<div class="t " style="left:985.69px;top:744px;font-size:10.3px;color:#262626;font-weight:700;">80</div>
<div class="abs sw" style="left:1022.24px;top:693.7px;width:58.2px;height:63.2px;background:linear-gradient(#989898,#8a8a8a 5%,#808080 30%,#747474 70%,#686868);border-radius:4px 4px 2px 2px;box-shadow:inset 0 1px 0 #a0a0a0,inset 1.3px 0 0 rgba(160,160,160,.55),inset -1.3px 0 0 rgba(150,150,150,.5);"></div>
<div class="abs" style="left:1027.79px;top:698.9px;width:47.1px;height:37.2px;border-radius:3.5px 3.5px 2px 2px;background:rgb(217,217,217);box-shadow:inset 0 1.5px 1.5px rgba(0,0,0,.32),inset 0 0 0 0.8px rgba(0,0,0,.08)"></div>
<div class="t " style="left:1045.69px;top:744px;font-size:10.3px;color:#262626;font-weight:700;">85</div>
<div class="abs sw" style="left:1082.31px;top:693.7px;width:58.2px;height:63.2px;background:linear-gradient(#989898,#8a8a8a 5%,#808080 30%,#747474 70%,#686868);border-radius:4px 4px 2px 2px;box-shadow:inset 0 1px 0 #a0a0a0,inset 1.3px 0 0 rgba(160,160,160,.55),inset -1.3px 0 0 rgba(150,150,150,.5);"></div>
<div class="abs" style="left:1087.86px;top:698.9px;width:47.1px;height:37.2px;border-radius:3.5px 3.5px 2px 2px;background:rgb(230,230,230);box-shadow:inset 0 1.5px 1.5px rgba(0,0,0,.32),inset 0 0 0 0.8px rgba(0,0,0,.08)"></div>
<div class="t " style="left:1105.81px;top:744px;font-size:10.3px;color:#262626;font-weight:700;">90</div>
<div class="abs sw" style="left:1142.38px;top:693.7px;width:58.2px;height:63.2px;background:linear-gradient(#989898,#8a8a8a 5%,#808080 30%,#747474 70%,#686868);border-radius:4px 4px 2px 2px;box-shadow:inset 0 1px 0 #a0a0a0,inset 1.3px 0 0 rgba(160,160,160,.55),inset -1.3px 0 0 rgba(150,150,150,.5);"></div>
<div class="abs" style="left:1147.93px;top:698.9px;width:47.1px;height:37.2px;border-radius:3.5px 3.5px 2px 2px;background:rgb(242,242,242);box-shadow:inset 0 1.5px 1.5px rgba(0,0,0,.32),inset 0 0 0 0.8px rgba(0,0,0,.08)"></div>
<div class="t " style="left:1165.82px;top:744px;font-size:10.3px;color:#262626;font-weight:700;">95</div>
<div class="abs sw" style="left:1202.45px;top:693.7px;width:58.2px;height:63.2px;background:linear-gradient(#989898,#8a8a8a 5%,#808080 30%,#747474 70%,#686868);border-radius:4px 4px 2px 2px;box-shadow:inset 0 1px 0 #a0a0a0,inset 1.3px 0 0 rgba(160,160,160,.55),inset -1.3px 0 0 rgba(150,150,150,.5);"></div>
<div class="abs" style="left:1208.00px;top:698.9px;width:47.1px;height:37.2px;border-radius:3.5px 3.5px 2px 2px;background:rgb(255,255,255);box-shadow:inset 0 1.5px 1.5px rgba(0,0,0,.32),inset 0 0 0 0.8px rgba(0,0,0,.08)"></div>
<div class="t " style="left:1222.94px;top:744px;font-size:10.3px;color:#262626;font-weight:700;">100</div>
</nav>
<section id="controls" aria-label="Measurement controls">
<div class="abs" style="left:1314.0px;top:692.0px;width:284.0px;height:66.0px;background:#242424;"></div>
<div class="abs" style="left:1263.6px;top:693.8px;width:49.6px;height:17.6px;background:linear-gradient(#8e8e8e,#787878);border-radius:4px 4px 0 0;box-shadow:inset 0 1px 0 #9c9c9c;"></div>
<div class="abs" style="left:1263.6px;top:712.8px;width:49.6px;height:45.2px;background:linear-gradient(#8a8a8a,#747474 50%,#626262);box-shadow:inset 0 1px 0 #969696;"></div>
<div class="abs" style="left:1314.8px;top:692.8px;width:47.4px;height:31.2px;background:linear-gradient(#9c9c9c,#808080 50%,#626262);box-shadow:inset 0 1px 0 #a6a6a6;"></div>
<div class="abs" style="left:1363.2px;top:692.8px;width:45.6px;height:31.2px;background:linear-gradient(#9c9c9c,#808080 50%,#626262);box-shadow:inset 0 1px 0 #a6a6a6;"></div>
<div class="abs" style="left:1409.8px;top:692.8px;width:45.8px;height:31.2px;background:linear-gradient(#9c9c9c,#808080 50%,#626262);box-shadow:inset 0 1px 0 #a6a6a6;"></div>
<div class="abs" style="left:1457.6px;top:692.8px;width:45.7px;height:31.2px;background:linear-gradient(#a4a4a4,#8a8a8a 50%,#6c6c6c);box-shadow:inset 0 1px 0 #acacac;"></div>
<div class="abs" style="left:1503.3px;top:692.8px;width:47.3px;height:31.2px;background:linear-gradient(#3c3c3c,#343434 50%,#2e2e2e);"></div>
<div class="abs" style="left:1550.6px;top:692.8px;width:46.9px;height:31.2px;background:linear-gradient(#a2a2a2,#868686 50%,#686868);box-shadow:inset 0 1px 0 #acacac;border-radius:0 4px 0 0;"></div>
<div class="abs" style="left:1314.8px;top:726.0px;width:140.8px;height:30.6px;background:linear-gradient(#a2a2a2,#8a8a8a 45%,#6a6a6a);box-shadow:inset 0 1px 0 #b4b4b4;border-radius:4px 0 0 0;"></div>
<div class="abs" style="left:1457.6px;top:726.0px;width:139.9px;height:30.6px;background:linear-gradient(#a2a2a2,#8a8a8a 45%,#6a6a6a);box-shadow:inset 0 1px 0 #b4b4b4;border-radius:0 0 3px 0;"></div>
<div class="t " style="left:1373.62px;top:732px;font-size:22.6px;color:#343434;transform:scaleX(1.0656);-webkit-text-stroke:0.5px #343434;text-shadow:0 1px 0 rgba(255,255,255,.15);">Back</div>
<div class="t " style="left:1484.61px;top:732px;font-size:22.6px;color:#343434;transform:scaleX(1.1789);-webkit-text-stroke:0.5px #343434;text-shadow:0 1px 0 rgba(255,255,255,.15);">Next</div>
<svg width="1600" height="758" viewBox="0 0 1600 758"><defs><linearGradient id="cg" x1="0" y1="0" x2="0" y2="1"><stop offset="0" stop-color="#6c6c6c"/><stop offset="1" stop-color="#949494"/></linearGradient><linearGradient id="cgl" x1="0" y1="0" x2="0" y2="1"><stop offset="0" stop-color="#8c8c8c"/><stop offset="1" stop-color="#a8a8a8"/></linearGradient><linearGradient id="cgs" x1="0" y1="0" x2="0" y2="1"><stop offset="0" stop-color="#8c8c8c"/><stop offset="1" stop-color="#7a7a7a"/></linearGradient><linearGradient id="rim" x1="0" y1="0" x2="0" y2="1"><stop offset="0" stop-color="#606060" stop-opacity=".55"/><stop offset=".5" stop-color="#808080" stop-opacity="0"/><stop offset="1" stop-color="#b4b4b4" stop-opacity=".8"/></linearGradient><linearGradient id="cgd" x1="0" y1="0" x2="0" y2="1"><stop offset="0" stop-color="#2a2a2a"/><stop offset="1" stop-color="#383838"/></linearGradient></defs><circle cx="1338.8" cy="708.7" r="10.4" fill="url(#cg)"/><circle cx="1338.8" cy="708.7" r="9.9" fill="none" stroke="url(#rim)" stroke-width="1.2"/><circle cx="1386.5" cy="708.7" r="10.4" fill="url(#cg)"/><circle cx="1386.5" cy="708.7" r="9.9" fill="none" stroke="url(#rim)" stroke-width="1.2"/><circle cx="1433.3" cy="708.7" r="10.4" fill="url(#cgl)"/><circle cx="1433.3" cy="708.7" r="9.9" fill="none" stroke="url(#rim)" stroke-width="1.2"/><circle cx="1480.3" cy="708.7" r="10.4" fill="url(#cgl)"/><circle cx="1480.3" cy="708.7" r="9.9" fill="none" stroke="url(#rim)" stroke-width="1.2"/><circle cx="1574.6" cy="708.7" r="10.2" fill="url(#cgs)"/><circle cx="1574.6" cy="708.7" r="9.7" fill="none" stroke="url(#rim)" stroke-width="1.2"/><circle cx="1527.6" cy="708.7" r="10.4" fill="url(#cgd)"/><circle cx="1346.8" cy="741.4" r="10.6" fill="url(#cg)"/><circle cx="1346.8" cy="741.4" r="10.1" fill="none" stroke="url(#rim)" stroke-width="1.2"/><circle cx="1569.2" cy="741.4" r="10.6" fill="url(#cg)"/><circle cx="1569.2" cy="741.4" r="10.1" fill="none" stroke="url(#rim)" stroke-width="1.2"/><circle cx="1288.7" cy="703.0" r="7.9" fill="url(#cg)"/><circle cx="1288.7" cy="703.0" r="7.4" fill="none" stroke="url(#rim)" stroke-width="1.2"/><rect x="1334.5" y="704.7" width="8.7" height="8.3" fill="#2c2c2c"/><path d="M1383.4 704.0v10.8l9-5.4z" fill="#2a2a2a"/><g fill="none" stroke="#2c2c2c" stroke-width="2"><path d="M1430.4 704.6h-2.4v9.4h2.4M1436.6 704.6h2.4v9.4h-2.4"/></g><path d="M1430.9 708.4l2-1.6v3.2zM1436.1 708.4l-2-1.6v3.2z" fill="#333"/><path d="M1480.3 708.9c-1.5-1.9-2.5-2.7-4-2.7a2.7 2.7 0 0 0 0 5.4c1.5 0 2.5-.8 4-2.7c1.5-1.9 2.5-2.7 4-2.7a2.7 2.7 0 0 1 0 5.4c-1.5 0-2.5-.8-4-2.7z" fill="none" stroke="#2e2e2e" stroke-width="1.9"/><g fill="none" stroke="#171717" stroke-width="2.6"><path d="M1522.6 707.6a5.2 5.2 0 0 1 8.6-2.6"/><path d="M1532.8 709.8a5.2 5.2 0 0 1-8.6 2.6"/></g><path d="M1534.2 702.2v5.2h-5.2z M1521.2 715.2v-5.2h5.2z" fill="#171717"/><path d="M1283.6 704.8h10.4l-5.2-4.8z" fill="#2e2e2e"/><g fill="none" stroke="#303030" stroke-width="2"><path d="M1346.4 737.2l-3.8 4.6 3.8 4.6M1351.2 737.2l-3.8 4.6 3.8 4.6"/><path d="M1565.0 737.2l3.8 4.6-3.8 4.6M1569.8 737.2l3.8 4.6-3.8 4.6"/></g><defs><linearGradient id="bs" x1="0" y1="0" x2="0" y2="1"><stop offset="0" stop-color="#a4a4a4"/><stop offset=".49" stop-color="#8e8e8e"/><stop offset=".5" stop-color="#787878"/><stop offset="1" stop-color="#808080"/></linearGradient><linearGradient id="bq" x1="0" y1="0" x2="0" y2="1"><stop offset="0" stop-color="#2c2c2c"/><stop offset=".46" stop-color="#262626"/><stop offset=".47" stop-color="#000"/><stop offset="1" stop-color="#000"/></linearGradient></defs><rect x="1273.5" y="720.2" width="29.6" height="29.2" rx="4.5" fill="url(#bs)" stroke="#0a0a0a" stroke-width="2.2"/><rect x="1281.8" y="728.2" width="14.1" height="13.6" fill="url(#bq)"/></svg>
</section>
<div class="abs" style="left:1592.4px;top:0;width:4px;height:692px;background:#303030"></div>
<div class="abs" style="left:1596.3px;top:0;width:3.7px;height:692px;background:#1c1c1c"></div>
<div class="abs" style="left:1597.5px;top:690px;width:2.5px;height:68px;background:#1c1c1c"></div>
<div class="abs" style="left:1263px;top:756.6px;width:337px;height:1.4px;background:#242424"></div>
<div class="abs" style="left:1314px;top:690.4px;width:286px;height:2.4px;background:#282828"></div>
</div></body></html>
